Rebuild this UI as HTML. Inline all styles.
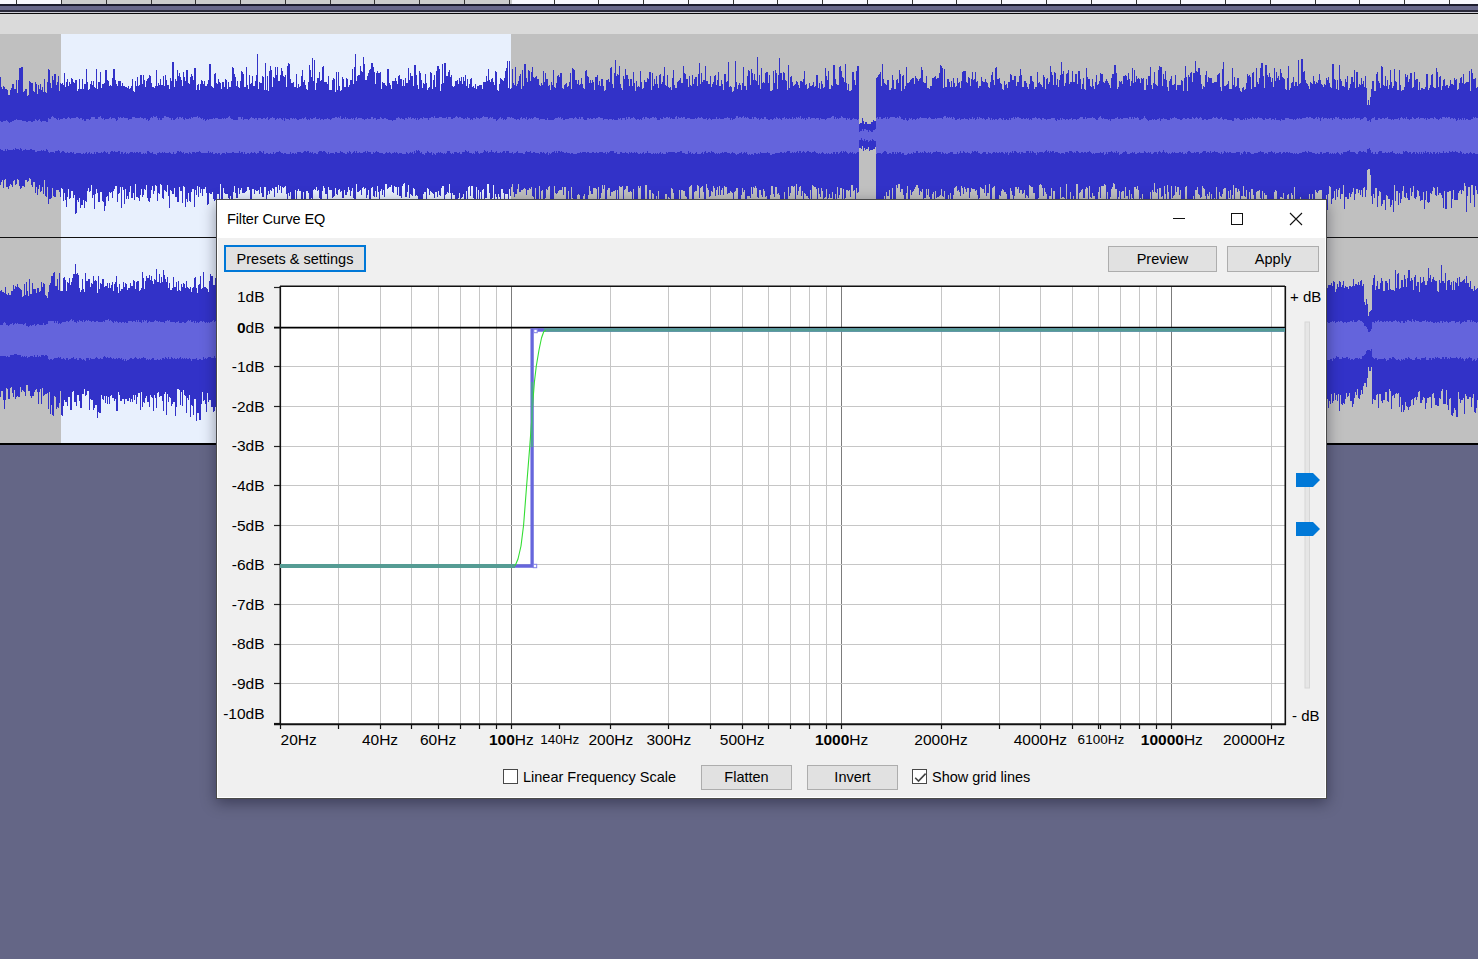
<!DOCTYPE html>
<html><head><meta charset="utf-8">
<style>
html,body{margin:0;padding:0;}
body{width:1478px;height:959px;overflow:hidden;background:#646686;position:relative;font-family:"Liberation Sans", sans-serif;}
.abs{position:absolute;}
.t{position:absolute;white-space:nowrap;color:#000;line-height:1;}
</style></head><body>

<div class="abs" style="left:0;top:0;width:1478px;height:4px;background:#f8f8fe"></div>
<div class="abs" style="left:62px;top:0;width:450px;height:4px;background:#cbcccc"></div>
<div class="abs" style="left:16px;top:0;width:1px;height:4px;background:#333"></div><div class="abs" style="left:61px;top:0;width:1px;height:4px;background:#333"></div><div class="abs" style="left:106px;top:0;width:1px;height:4px;background:#333"></div><div class="abs" style="left:151px;top:0;width:1px;height:4px;background:#333"></div><div class="abs" style="left:195px;top:0;width:1px;height:4px;background:#333"></div><div class="abs" style="left:240px;top:0;width:1px;height:4px;background:#333"></div><div class="abs" style="left:285px;top:0;width:1px;height:4px;background:#333"></div><div class="abs" style="left:330px;top:0;width:1px;height:4px;background:#333"></div><div class="abs" style="left:374px;top:0;width:1px;height:4px;background:#333"></div><div class="abs" style="left:419px;top:0;width:1px;height:4px;background:#333"></div><div class="abs" style="left:464px;top:0;width:1px;height:4px;background:#333"></div><div class="abs" style="left:509px;top:0;width:1px;height:4px;background:#333"></div><div class="abs" style="left:554px;top:0;width:1px;height:4px;background:#333"></div><div class="abs" style="left:598px;top:0;width:1px;height:4px;background:#333"></div><div class="abs" style="left:643px;top:0;width:1px;height:4px;background:#333"></div><div class="abs" style="left:688px;top:0;width:1px;height:4px;background:#333"></div><div class="abs" style="left:733px;top:0;width:1px;height:4px;background:#333"></div><div class="abs" style="left:777px;top:0;width:1px;height:4px;background:#333"></div><div class="abs" style="left:822px;top:0;width:1px;height:4px;background:#333"></div><div class="abs" style="left:867px;top:0;width:1px;height:4px;background:#333"></div><div class="abs" style="left:912px;top:0;width:1px;height:4px;background:#333"></div><div class="abs" style="left:956px;top:0;width:1px;height:4px;background:#333"></div><div class="abs" style="left:1001px;top:0;width:1px;height:4px;background:#333"></div><div class="abs" style="left:1046px;top:0;width:1px;height:4px;background:#333"></div><div class="abs" style="left:1091px;top:0;width:1px;height:4px;background:#333"></div><div class="abs" style="left:1136px;top:0;width:1px;height:4px;background:#333"></div><div class="abs" style="left:1180px;top:0;width:1px;height:4px;background:#333"></div><div class="abs" style="left:1225px;top:0;width:1px;height:4px;background:#333"></div><div class="abs" style="left:1270px;top:0;width:1px;height:4px;background:#333"></div><div class="abs" style="left:1315px;top:0;width:1px;height:4px;background:#333"></div><div class="abs" style="left:1359px;top:0;width:1px;height:4px;background:#333"></div><div class="abs" style="left:1404px;top:0;width:1px;height:4px;background:#333"></div><div class="abs" style="left:1449px;top:0;width:1px;height:4px;background:#333"></div><div class="abs" style="left:1494px;top:0;width:1px;height:4px;background:#333"></div>
<div class="abs" style="left:0;top:4px;width:1478px;height:2px;background:#1c1c2e"></div>
<div class="abs" style="left:0;top:6px;width:1478px;height:4px;background:#67678a"></div>
<div class="abs" style="left:0;top:10px;width:1478px;height:2px;background:#2a2a3a"></div>
<div class="abs" style="left:0;top:12px;width:1478px;height:1px;background:#ccccd6"></div>
<div class="abs" style="left:0;top:13px;width:1478px;height:1px;background:#0a0a0a"></div>
<div class="abs" style="left:0;top:14px;width:1478px;height:20px;background:#dadada"></div>
<svg class="abs" style="left:0;top:34px" width="1478" height="411" viewBox="0 34 1478 411" shape-rendering="crispEdges"><rect x="0" y="34" width="1478" height="410" fill="#c0c0c0"/><rect x="61" y="34" width="450" height="410" fill="#e8f0fd"/><path fill="#3232c8" d="M0,77V77h1V87h1V89h1V86h1V87h1V89h1V89h1V90h1V95h1V95h1V90h1V88h1V84h1V84h1V89h1V89h1V80h1V93h1V80h1V68h1V68h1V67h1V67h1V92h1V91h1V89h1V89h1V96h1V95h1V81h1V82h1V83h1V83h1V91h1V92h1V82h1V84h1V94h1V85h1V89h1V84h1V90h1V87h1V92h1V79h1V92h1V93h1V82h1V69h1V70h1V83h1V88h1V76h1V80h1V74h1V74h1V85h1V82h1V76h1V91h1V83h1V84h1V83h1V85h1V73h1V87h1V82h1V79h1V86h1V82h1V84h1V78h1V79h1V82h1V83h1V80h1V80h1V91h1V89h1V79h1V89h1V89h1V79h1V89h1V84h1V84h1V69h1V82h1V90h1V89h1V84h1V81h1V85h1V81h1V87h1V88h1V69h1V89h1V82h1V82h1V72h1V88h1V84h1V84h1V83h1V70h1V70h1V80h1V81h1V86h1V85h1V86h1V78h1V69h1V69h1V80h1V84h1V86h1V81h1V81h1V81h1V86h1V83h1V86h1V86h1V87h1V87h1V88h1V86h1V89h1V88h1V86h1V79h1V91h1V92h1V81h1V86h1V77h1V86h1V85h1V75h1V75h1V84h1V75h1V80h1V87h1V81h1V79h1V78h1V75h1V76h1V83h1V87h1V87h1V88h1V86h1V70h1V86h1V83h1V85h1V79h1V85h1V85h1V76h1V86h1V75h1V80h1V85h1V85h1V89h1V78h1V81h1V62h1V62h1V87h1V79h1V81h1V70h1V76h1V73h1V77h1V80h1V86h1V72h1V77h1V81h1V70h1V70h1V83h1V84h1V77h1V74h1V76h1V80h1V68h1V68h1V90h1V85h1V84h1V90h1V84h1V80h1V81h1V84h1V81h1V86h1V86h1V84h1V80h1V64h1V64h1V86h1V87h1V88h1V74h1V73h1V83h1V84h1V79h1V82h1V83h1V89h1V82h1V82h1V87h1V79h1V80h1V89h1V82h1V87h1V87h1V81h1V67h1V68h1V74h1V77h1V86h1V81h1V87h1V88h1V81h1V71h1V72h1V74h1V87h1V87h1V67h1V85h1V89h1V75h1V84h1V83h1V76h1V86h1V86h1V81h1V75h1V54h1V89h1V82h1V83h1V83h1V76h1V77h1V90h1V63h1V90h1V76h1V91h1V71h1V66h1V70h1V87h1V77h1V78h1V67h1V75h1V67h1V81h1V81h1V75h1V68h1V71h1V76h1V77h1V75h1V87h1V66h1V63h1V64h1V79h1V83h1V83h1V82h1V87h1V87h1V74h1V88h1V84h1V87h1V86h1V76h1V70h1V82h1V80h1V85h1V89h1V90h1V82h1V65h1V70h1V77h1V58h1V81h1V60h1V90h1V83h1V78h1V78h1V72h1V81h1V80h1V67h1V66h1V82h1V82h1V82h1V84h1V76h1V90h1V90h1V90h1V80h1V78h1V79h1V92h1V72h1V90h1V72h1V86h1V91h1V90h1V77h1V79h1V87h1V87h1V78h1V79h1V87h1V85h1V80h1V80h1V69h1V84h1V67h1V54h1V81h1V76h1V75h1V75h1V66h1V71h1V72h1V57h1V64h1V80h1V80h1V76h1V73h1V70h1V69h1V63h1V63h1V67h1V72h1V84h1V73h1V71h1V73h1V73h1V72h1V89h1V82h1V83h1V83h1V85h1V86h1V69h1V69h1V83h1V85h1V89h1V81h1V81h1V81h1V78h1V81h1V84h1V76h1V75h1V79h1V79h1V86h1V80h1V86h1V78h1V83h1V83h1V68h1V80h1V73h1V76h1V76h1V86h1V65h1V65h1V75h1V85h1V89h1V71h1V73h1V80h1V88h1V83h1V84h1V74h1V83h1V90h1V88h1V87h1V72h1V73h1V89h1V80h1V75h1V87h1V71h1V66h1V66h1V69h1V91h1V84h1V64h1V83h1V63h1V63h1V76h1V76h1V72h1V70h1V77h1V75h1V86h1V87h1V86h1V81h1V81h1V80h1V84h1V78h1V81h1V77h1V84h1V77h1V81h1V75h1V86h1V79h1V88h1V84h1V79h1V78h1V87h1V86h1V88h1V84h1V89h1V86h1V86h1V85h1V85h1V85h1V89h1V82h1V82h1V82h1V76h1V81h1V69h1V80h1V82h1V79h1V78h1V82h1V85h1V71h1V72h1V90h1V91h1V84h1V78h1V79h1V80h1V81h1V78h1V71h1V68h1V61h1V88h1V61h1V89h1V88h1V69h1V83h1V85h1V67h1V86h1V84h1V81h1V76h1V74h1V89h1V70h1V86h1V64h1V64h1V78h1V82h1V70h1V71h1V81h1V72h1V67h1V77h1V78h1V77h1V76h1V79h1V79h1V85h1V86h1V83h1V85h1V71h1V82h1V73h1V79h1V79h1V86h1V85h1V90h1V82h1V85h1V70h1V87h1V88h1V83h1V76h1V75h1V77h1V73h1V73h1V88h1V89h1V85h1V84h1V83h1V87h1V86h1V82h1V73h1V89h1V68h1V69h1V70h1V80h1V80h1V84h1V80h1V85h1V84h1V78h1V84h1V88h1V89h1V71h1V70h1V76h1V77h1V83h1V80h1V83h1V80h1V82h1V90h1V77h1V77h1V75h1V85h1V81h1V86h1V79h1V79h1V86h1V91h1V90h1V80h1V80h1V79h1V82h1V68h1V67h1V84h1V88h1V73h1V60h1V76h1V74h1V75h1V66h1V84h1V88h1V90h1V76h1V79h1V69h1V75h1V75h1V79h1V86h1V79h1V79h1V86h1V72h1V83h1V91h1V81h1V87h1V86h1V87h1V71h1V82h1V89h1V88h1V80h1V82h1V82h1V78h1V79h1V72h1V72h1V90h1V73h1V86h1V79h1V84h1V76h1V84h1V88h1V75h1V74h1V84h1V82h1V76h1V67h1V85h1V86h1V75h1V87h1V88h1V87h1V90h1V78h1V70h1V85h1V88h1V88h1V82h1V81h1V80h1V78h1V83h1V83h1V66h1V73h1V74h1V79h1V79h1V87h1V76h1V85h1V86h1V75h1V84h1V79h1V77h1V77h1V86h1V74h1V63h1V84h1V73h1V82h1V80h1V80h1V66h1V81h1V81h1V84h1V84h1V76h1V87h1V84h1V82h1V76h1V75h1V85h1V80h1V72h1V86h1V86h1V80h1V84h1V90h1V74h1V74h1V82h1V81h1V62h1V87h1V86h1V87h1V92h1V91h1V87h1V61h1V82h1V89h1V85h1V83h1V85h1V90h1V83h1V67h1V86h1V86h1V90h1V76h1V70h1V71h1V85h1V69h1V73h1V80h1V74h1V80h1V81h1V57h1V85h1V75h1V89h1V68h1V83h1V82h1V83h1V73h1V72h1V72h1V83h1V75h1V91h1V91h1V90h1V71h1V83h1V70h1V73h1V89h1V75h1V58h1V73h1V73h1V80h1V72h1V73h1V80h1V81h1V90h1V65h1V88h1V77h1V76h1V82h1V86h1V85h1V84h1V81h1V82h1V85h1V88h1V81h1V81h1V82h1V79h1V71h1V85h1V84h1V89h1V88h1V83h1V86h1V86h1V85h1V82h1V87h1V86h1V75h1V75h1V88h1V83h1V89h1V81h1V84h1V88h1V87h1V68h1V76h1V80h1V71h1V89h1V89h1V85h1V86h1V65h1V65h1V79h1V84h1V85h1V85h1V67h1V66h1V71h1V77h1V78h1V82h1V64h1V83h1V90h1V84h1V91h1V91h1V90h1V72h1V72h1V80h1V85h1V71h1V66h1V66h1V124h1V123h1V123h1V118h1V121h1V124h1V122h1V122h1V124h1V124h1V124h1V124h1V122h1V122h1V120h1V121h1V121h1V78h1V77h1V75h1V74h1V72h1V86h1V64h1V79h1V83h1V84h1V85h1V80h1V80h1V90h1V90h1V88h1V75h1V80h1V89h1V89h1V80h1V79h1V83h1V70h1V74h1V91h1V76h1V75h1V89h1V86h1V67h1V83h1V83h1V82h1V80h1V79h1V78h1V78h1V84h1V76h1V78h1V79h1V81h1V79h1V78h1V67h1V70h1V82h1V83h1V83h1V76h1V88h1V88h1V89h1V86h1V86h1V78h1V78h1V77h1V76h1V79h1V78h1V78h1V73h1V65h1V66h1V68h1V88h1V69h1V87h1V87h1V79h1V79h1V82h1V87h1V81h1V87h1V78h1V83h1V87h1V86h1V78h1V83h1V82h1V88h1V81h1V72h1V71h1V71h1V71h1V82h1V83h1V77h1V78h1V86h1V79h1V72h1V80h1V79h1V72h1V82h1V81h1V88h1V86h1V86h1V77h1V81h1V82h1V82h1V79h1V82h1V83h1V87h1V88h1V82h1V75h1V72h1V80h1V85h1V68h1V67h1V79h1V79h1V78h1V83h1V84h1V89h1V90h1V81h1V85h1V84h1V88h1V82h1V82h1V74h1V75h1V80h1V80h1V76h1V76h1V86h1V82h1V82h1V76h1V69h1V75h1V87h1V87h1V81h1V81h1V83h1V87h1V89h1V84h1V76h1V76h1V81h1V82h1V89h1V87h1V87h1V72h1V83h1V82h1V84h1V85h1V87h1V75h1V77h1V89h1V79h1V78h1V84h1V82h1V66h1V72h1V75h1V85h1V72h1V73h1V85h1V79h1V87h1V80h1V75h1V62h1V74h1V71h1V86h1V83h1V74h1V73h1V70h1V84h1V82h1V82h1V71h1V82h1V82h1V74h1V74h1V84h1V71h1V71h1V79h1V89h1V84h1V78h1V89h1V90h1V68h1V77h1V79h1V79h1V86h1V87h1V79h1V86h1V89h1V82h1V75h1V85h1V84h1V81h1V73h1V74h1V74h1V82h1V83h1V81h1V79h1V81h1V83h1V85h1V88h1V78h1V74h1V74h1V65h1V65h1V73h1V89h1V87h1V81h1V82h1V81h1V84h1V76h1V76h1V75h1V76h1V80h1V73h1V79h1V86h1V81h1V68h1V83h1V70h1V82h1V76h1V79h1V78h1V79h1V83h1V78h1V79h1V78h1V90h1V90h1V79h1V85h1V76h1V76h1V67h1V85h1V89h1V83h1V72h1V84h1V85h1V86h1V70h1V66h1V67h1V67h1V86h1V74h1V79h1V71h1V80h1V87h1V91h1V81h1V79h1V76h1V85h1V85h1V84h1V75h1V90h1V85h1V85h1V85h1V85h1V80h1V81h1V91h1V78h1V66h1V77h1V91h1V75h1V77h1V73h1V72h1V82h1V73h1V73h1V61h1V71h1V72h1V68h1V68h1V75h1V84h1V89h1V86h1V87h1V75h1V71h1V82h1V77h1V78h1V78h1V78h1V83h1V83h1V82h1V82h1V82h1V75h1V74h1V73h1V87h1V91h1V69h1V62h1V86h1V86h1V85h1V84h1V81h1V89h1V89h1V89h1V68h1V85h1V77h1V87h1V86h1V78h1V78h1V88h1V91h1V92h1V88h1V87h1V90h1V89h1V83h1V74h1V76h1V75h1V77h1V89h1V73h1V72h1V87h1V87h1V68h1V82h1V84h1V78h1V68h1V63h1V63h1V76h1V88h1V65h1V65h1V75h1V77h1V73h1V77h1V82h1V78h1V87h1V68h1V81h1V72h1V78h1V76h1V80h1V69h1V73h1V77h1V78h1V79h1V89h1V90h1V78h1V66h1V90h1V88h1V83h1V82h1V77h1V86h1V82h1V82h1V86h1V60h1V84h1V83h1V59h1V59h1V72h1V71h1V80h1V83h1V84h1V86h1V89h1V82h1V83h1V84h1V76h1V81h1V84h1V82h1V83h1V80h1V74h1V80h1V84h1V85h1V87h1V84h1V85h1V78h1V80h1V77h1V83h1V87h1V88h1V64h1V64h1V79h1V80h1V89h1V80h1V90h1V65h1V79h1V81h1V86h1V86h1V87h1V79h1V82h1V76h1V90h1V88h1V84h1V77h1V77h1V82h1V70h1V88h1V72h1V72h1V87h1V84h1V85h1V78h1V84h1V81h1V87h1V76h1V88h1V105h1V100h1V105h1V97h1V89h1V81h1V81h1V91h1V91h1V74h1V72h1V81h1V83h1V88h1V66h1V67h1V85h1V86h1V76h1V86h1V80h1V89h1V85h1V70h1V82h1V88h1V86h1V69h1V81h1V82h1V90h1V90h1V70h1V85h1V91h1V90h1V90h1V87h1V74h1V77h1V75h1V82h1V79h1V73h1V73h1V88h1V87h1V72h1V80h1V79h1V79h1V90h1V82h1V90h1V88h1V88h1V89h1V89h1V87h1V74h1V74h1V90h1V88h1V85h1V75h1V74h1V87h1V88h1V88h1V68h1V72h1V87h1V77h1V76h1V90h1V86h1V80h1V79h1V86h1V85h1V85h1V88h1V86h1V80h1V84h1V84h1V85h1V78h1V80h1V79h1V90h1V89h1V83h1V78h1V77h1V83h1V74h1V84h1V83h1V82h1V82h1V82h1V71h1V91h1V69h1V73h1V79h1V79h1V78h1V88h1V87h1V194h-1V190h-1V186h-1V207h-1V195h-1V185h-1V185h-1V203h-1V187h-1V187h-1V196h-1V212h-1V186h-1V183h-1V191h-1V190h-1V194h-1V190h-1V191h-1V193h-1V200h-1V200h-1V200h-1V200h-1V190h-1V199h-1V208h-1V191h-1V191h-1V192h-1V192h-1V209h-1V209h-1V191h-1V208h-1V198h-1V195h-1V193h-1V193h-1V195h-1V187h-1V196h-1V195h-1V188h-1V187h-1V191h-1V194h-1V193h-1V202h-1V203h-1V202h-1V191h-1V200h-1V209h-1V192h-1V200h-1V200h-1V201h-1V196h-1V191h-1V190h-1V197h-1V199h-1V198h-1V186h-1V192h-1V196h-1V188h-1V200h-1V200h-1V198h-1V193h-1V198h-1V197h-1V186h-1V191h-1V199h-1V203h-1V193h-1V205h-1V191h-1V191h-1V201h-1V185h-1V212h-1V200h-1V205h-1V207h-1V199h-1V199h-1V196h-1V195h-1V210h-1V200h-1V200h-1V204h-1V206h-1V192h-1V191h-1V196h-1V207h-1V188h-1V188h-1V198h-1V194h-1V204h-1V196h-1V175h-1V169h-1V169h-1V170h-1V190h-1V197h-1V187h-1V188h-1V197h-1V190h-1V195h-1V190h-1V193h-1V189h-1V189h-1V194h-1V200h-1V188h-1V192h-1V194h-1V197h-1V193h-1V199h-1V199h-1V197h-1V197h-1V209h-1V185h-1V194h-1V194h-1V199h-1V188h-1V190h-1V197h-1V189h-1V200h-1V191h-1V198h-1V199h-1V204h-1V187h-1V186h-1V194h-1V210h-1V195h-1V202h-1V204h-1V203h-1V203h-1V190h-1V190h-1V190h-1V191h-1V193h-1V192h-1V190h-1V202h-1V202h-1V194h-1V203h-1V203h-1V194h-1V212h-1V208h-1V206h-1V205h-1V205h-1V205h-1V202h-1V218h-1V197h-1V205h-1V213h-1V212h-1V202h-1V207h-1V187h-1V202h-1V195h-1V193h-1V202h-1V202h-1V194h-1V195h-1V202h-1V199h-1V199h-1V193h-1V198h-1V197h-1V197h-1V202h-1V200h-1V202h-1V191h-1V190h-1V192h-1V200h-1V201h-1V209h-1V199h-1V213h-1V199h-1V200h-1V195h-1V195h-1V193h-1V206h-1V191h-1V200h-1V198h-1V190h-1V191h-1V191h-1V192h-1V200h-1V199h-1V195h-1V189h-1V189h-1V207h-1V192h-1V204h-1V204h-1V190h-1V197h-1V196h-1V186h-1V196h-1V196h-1V200h-1V191h-1V189h-1V192h-1V188h-1V188h-1V199h-1V185h-1V195h-1V200h-1V190h-1V198h-1V191h-1V199h-1V199h-1V188h-1V188h-1V189h-1V194h-1V197h-1V196h-1V192h-1V201h-1V201h-1V187h-1V199h-1V198h-1V201h-1V200h-1V194h-1V206h-1V192h-1V196h-1V194h-1V200h-1V196h-1V189h-1V188h-1V186h-1V197h-1V198h-1V195h-1V194h-1V187h-1V190h-1V190h-1V199h-1V196h-1V208h-1V207h-1V199h-1V199h-1V204h-1V208h-1V186h-1V187h-1V208h-1V199h-1V199h-1V200h-1V190h-1V195h-1V187h-1V187h-1V192h-1V186h-1V195h-1V196h-1V198h-1V186h-1V204h-1V204h-1V192h-1V185h-1V202h-1V194h-1V186h-1V200h-1V196h-1V197h-1V188h-1V188h-1V204h-1V189h-1V193h-1V192h-1V183h-1V192h-1V190h-1V207h-1V192h-1V207h-1V207h-1V210h-1V200h-1V200h-1V200h-1V200h-1V194h-1V199h-1V198h-1V200h-1V190h-1V186h-1V189h-1V187h-1V187h-1V200h-1V198h-1V194h-1V205h-1V190h-1V209h-1V196h-1V196h-1V187h-1V198h-1V191h-1V191h-1V192h-1V207h-1V191h-1V197h-1V205h-1V189h-1V189h-1V184h-1V183h-1V187h-1V189h-1V197h-1V203h-1V201h-1V192h-1V204h-1V185h-1V184h-1V186h-1V186h-1V186h-1V198h-1V187h-1V192h-1V203h-1V202h-1V204h-1V196h-1V196h-1V193h-1V198h-1V197h-1V186h-1V199h-1V188h-1V187h-1V189h-1V198h-1V198h-1V189h-1V190h-1V192h-1V193h-1V203h-1V184h-1V184h-1V206h-1V207h-1V196h-1V208h-1V208h-1V192h-1V206h-1V207h-1V203h-1V184h-1V210h-1V198h-1V197h-1V197h-1V198h-1V187h-1V206h-1V199h-1V203h-1V199h-1V199h-1V191h-1V191h-1V210h-1V188h-1V196h-1V196h-1V201h-1V202h-1V194h-1V192h-1V188h-1V196h-1V188h-1V185h-1V184h-1V185h-1V198h-1V201h-1V200h-1V202h-1V193h-1V193h-1V187h-1V187h-1V186h-1V185h-1V198h-1V196h-1V195h-1V198h-1V190h-1V193h-1V194h-1V190h-1V190h-1V193h-1V187h-1V189h-1V187h-1V187h-1V196h-1V200h-1V195h-1V191h-1V188h-1V200h-1V203h-1V203h-1V194h-1V192h-1V192h-1V190h-1V189h-1V191h-1V196h-1V195h-1V206h-1V206h-1V201h-1V201h-1V186h-1V187h-1V188h-1V200h-1V200h-1V184h-1V193h-1V193h-1V196h-1V185h-1V193h-1V189h-1V189h-1V188h-1V187h-1V198h-1V199h-1V195h-1V190h-1V191h-1V189h-1V189h-1V189h-1V188h-1V192h-1V198h-1V188h-1V188h-1V192h-1V189h-1V187h-1V194h-1V188h-1V186h-1V196h-1V192h-1V190h-1V191h-1V186h-1V187h-1V188h-1V195h-1V209h-1V202h-1V193h-1V199h-1V195h-1V203h-1V207h-1V202h-1V191h-1V197h-1V196h-1V189h-1V195h-1V196h-1V197h-1V197h-1V198h-1V191h-1V204h-1V192h-1V194h-1V203h-1V203h-1V197h-1V189h-1V195h-1V189h-1V198h-1V198h-1V201h-1V189h-1V192h-1V191h-1V195h-1V188h-1V185h-1V185h-1V187h-1V189h-1V191h-1V192h-1V195h-1V190h-1V203h-1V205h-1V186h-1V193h-1V205h-1V205h-1V195h-1V189h-1V189h-1V192h-1V184h-1V184h-1V188h-1V185h-1V199h-1V206h-1V207h-1V188h-1V206h-1V206h-1V190h-1V196h-1V196h-1V192h-1V208h-1V196h-1V201h-1V200h-1V200h-1V201h-1V207h-1V202h-1V206h-1V203h-1V147h-1V149h-1V149h-1V150h-1V150h-1V150h-1V151h-1V147h-1V149h-1V149h-1V150h-1V148h-1V151h-1V146h-1V149h-1V148h-1V148h-1V192h-1V193h-1V188h-1V199h-1V190h-1V191h-1V185h-1V185h-1V197h-1V190h-1V191h-1V190h-1V190h-1V198h-1V210h-1V189h-1V199h-1V188h-1V188h-1V195h-1V198h-1V187h-1V202h-1V194h-1V199h-1V199h-1V192h-1V198h-1V198h-1V194h-1V198h-1V201h-1V189h-1V197h-1V198h-1V210h-1V191h-1V188h-1V197h-1V194h-1V188h-1V202h-1V189h-1V187h-1V187h-1V186h-1V185h-1V199h-1V190h-1V207h-1V198h-1V196h-1V196h-1V194h-1V193h-1V201h-1V191h-1V196h-1V186h-1V187h-1V191h-1V195h-1V184h-1V208h-1V186h-1V187h-1V186h-1V186h-1V193h-1V196h-1V187h-1V199h-1V200h-1V204h-1V192h-1V201h-1V207h-1V205h-1V215h-1V195h-1V193h-1V194h-1V187h-1V187h-1V197h-1V194h-1V186h-1V186h-1V195h-1V199h-1V201h-1V202h-1V196h-1V197h-1V191h-1V189h-1V197h-1V195h-1V190h-1V190h-1V198h-1V197h-1V188h-1V186h-1V188h-1V187h-1V194h-1V187h-1V198h-1V196h-1V196h-1V196h-1V204h-1V205h-1V190h-1V192h-1V188h-1V195h-1V199h-1V200h-1V200h-1V188h-1V188h-1V191h-1V192h-1V200h-1V193h-1V192h-1V191h-1V193h-1V193h-1V194h-1V187h-1V187h-1V186h-1V195h-1V188h-1V190h-1V195h-1V186h-1V195h-1V187h-1V190h-1V196h-1V188h-1V186h-1V192h-1V191h-1V196h-1V197h-1V190h-1V188h-1V184h-1V201h-1V202h-1V192h-1V186h-1V187h-1V188h-1V198h-1V186h-1V185h-1V191h-1V191h-1V192h-1V202h-1V202h-1V185h-1V186h-1V187h-1V199h-1V200h-1V197h-1V196h-1V191h-1V191h-1V190h-1V190h-1V205h-1V190h-1V207h-1V208h-1V212h-1V207h-1V207h-1V193h-1V189h-1V188h-1V203h-1V198h-1V197h-1V209h-1V194h-1V194h-1V206h-1V201h-1V200h-1V213h-1V201h-1V201h-1V191h-1V207h-1V196h-1V202h-1V201h-1V194h-1V193h-1V203h-1V190h-1V190h-1V205h-1V201h-1V185h-1V185h-1V205h-1V205h-1V210h-1V210h-1V186h-1V188h-1V186h-1V199h-1V201h-1V202h-1V203h-1V189h-1V202h-1V192h-1V191h-1V192h-1V192h-1V186h-1V186h-1V189h-1V190h-1V201h-1V186h-1V187h-1V187h-1V186h-1V205h-1V190h-1V199h-1V190h-1V191h-1V191h-1V192h-1V192h-1V196h-1V188h-1V188h-1V190h-1V199h-1V201h-1V185h-1V189h-1V185h-1V193h-1V198h-1V199h-1V187h-1V205h-1V189h-1V188h-1V188h-1V188h-1V194h-1V194h-1V191h-1V186h-1V195h-1V207h-1V215h-1V214h-1V194h-1V196h-1V202h-1V207h-1V199h-1V195h-1V194h-1V195h-1V205h-1V206h-1V207h-1V207h-1V198h-1V187h-1V199h-1V208h-1V191h-1V210h-1V200h-1V187h-1V187h-1V195h-1V187h-1V190h-1V190h-1V190h-1V191h-1V193h-1V194h-1V193h-1V186h-1V199h-1V204h-1V206h-1V200h-1V186h-1V187h-1V190h-1V189h-1V198h-1V209h-1V210h-1V190h-1V191h-1V205h-1V186h-1V203h-1V204h-1V204h-1V188h-1V201h-1V197h-1V196h-1V187h-1V189h-1V188h-1V190h-1V190h-1V195h-1V189h-1V188h-1V189h-1V190h-1V190h-1V192h-1V192h-1V184h-1V189h-1V194h-1V194h-1V197h-1V192h-1V184h-1V187h-1V196h-1V189h-1V200h-1V194h-1V194h-1V194h-1V200h-1V193h-1V189h-1V189h-1V207h-1V197h-1V194h-1V200h-1V197h-1V194h-1V201h-1V185h-1V198h-1V200h-1V200h-1V193h-1V184h-1V184h-1V198h-1V198h-1V199h-1V189h-1V190h-1V199h-1V192h-1V200h-1V190h-1V205h-1V187h-1V199h-1V200h-1V198h-1V186h-1V186h-1V196h-1V186h-1V187h-1V208h-1V191h-1V203h-1V204h-1V194h-1V197h-1V198h-1V200h-1V193h-1V198h-1V200h-1V202h-1V203h-1V195h-1V195h-1V193h-1V201h-1V193h-1V184h-1V193h-1V192h-1V194h-1V195h-1V199h-1V186h-1V186h-1V188h-1V196h-1V195h-1V191h-1V197h-1V192h-1V192h-1V198h-1V194h-1V193h-1V192h-1V191h-1V195h-1V189h-1V188h-1V200h-1V192h-1V192h-1V194h-1V199h-1V200h-1V200h-1V200h-1V200h-1V196h-1V195h-1V196h-1V189h-1V188h-1V196h-1V195h-1V194h-1V198h-1V185h-1V192h-1V197h-1V197h-1V183h-1V184h-1V186h-1V198h-1V196h-1V196h-1V187h-1V195h-1V187h-1V187h-1V186h-1V193h-1V192h-1V185h-1V187h-1V187h-1V188h-1V189h-1V184h-1V184h-1V197h-1V190h-1V195h-1V189h-1V191h-1V202h-1V192h-1V186h-1V197h-1V191h-1V197h-1V196h-1V187h-1V188h-1V204h-1V204h-1V190h-1V195h-1V198h-1V188h-1V189h-1V187h-1V188h-1V195h-1V190h-1V191h-1V192h-1V192h-1V184h-1V200h-1V201h-1V198h-1V188h-1V191h-1V196h-1V190h-1V187h-1V192h-1V195h-1V195h-1V190h-1V198h-1V198h-1V191h-1V192h-1V189h-1V190h-1V195h-1V194h-1V188h-1V196h-1V197h-1V198h-1V190h-1V190h-1V190h-1V187h-1V200h-1V194h-1V194h-1V188h-1V186h-1V191h-1V203h-1V203h-1V198h-1V190h-1V191h-1V187h-1V190h-1V189h-1V190h-1V201h-1V198h-1V200h-1V199h-1V193h-1V191h-1V191h-1V203h-1V204h-1V192h-1V199h-1V199h-1V191h-1V191h-1V189h-1V191h-1V199h-1V190h-1V205h-1V205h-1V200h-1V199h-1V192h-1V196h-1V193h-1V199h-1V194h-1V186h-1V187h-1V188h-1V187h-1V193h-1V186h-1V190h-1V185h-1V193h-1V187h-1V187h-1V197h-1V189h-1V188h-1V191h-1V190h-1V194h-1V191h-1V195h-1V201h-1V187h-1V187h-1V197h-1V197h-1V193h-1V187h-1V194h-1V190h-1V191h-1V191h-1V190h-1V194h-1V189h-1V189h-1V204h-1V203h-1V190h-1V187h-1V187h-1V191h-1V192h-1V193h-1V193h-1V193h-1V188h-1V190h-1V194h-1V188h-1V198h-1V198h-1V193h-1V186h-1V192h-1V204h-1V199h-1V196h-1V200h-1V198h-1V194h-1V194h-1V194h-1V193h-1V188h-1V208h-1V202h-1V184h-1V200h-1V194h-1V194h-1V208h-1V200h-1V201h-1V199h-1V192h-1V194h-1V194h-1V193h-1V204h-1V205h-1V193h-1V187h-1V189h-1V189h-1V196h-1V189h-1V193h-1V187h-1V197h-1V186h-1V195h-1V190h-1V207h-1V189h-1V189h-1V192h-1V202h-1V201h-1V193h-1V202h-1V199h-1V207h-1V187h-1V186h-1V203h-1V191h-1V191h-1V187h-1V202h-1V202h-1V197h-1V197h-1V188h-1V194h-1V194h-1V191h-1V190h-1V208h-1V196h-1V185h-1V192h-1V191h-1V190h-1V199h-1V198h-1V185h-1V184h-1V194h-1V193h-1V201h-1V186h-1V185h-1V191h-1V194h-1V186h-1V190h-1V198h-1V202h-1V201h-1V198h-1V185h-1V190h-1V189h-1V195h-1V197h-1V189h-1V195h-1V201h-1V198h-1V197h-1V197h-1V184h-1V200h-1V193h-1V198h-1V198h-1V186h-1V192h-1V199h-1V196h-1V199h-1V189h-1V204h-1V190h-1V187h-1V208h-1V187h-1V193h-1V194h-1V202h-1V186h-1V186h-1V189h-1V191h-1V198h-1V192h-1V193h-1V192h-1V201h-1V196h-1V197h-1V206h-1V211h-1V202h-1V201h-1V192h-1V192h-1V202h-1V202h-1V193h-1V189h-1V194h-1V209h-1V195h-1V198h-1V185h-1V191h-1V192h-1V188h-1V191h-1V202h-1V201h-1V208h-1V200h-1V205h-1V205h-1V208h-1V198h-1V202h-1V200h-1V213h-1V214h-1V195h-1V198h-1V191h-1V191h-1V198h-1V199h-1V189h-1V197h-1V207h-1V200h-1V193h-1V201h-1V189h-1V188h-1V197h-1V192h-1V190h-1V190h-1V190h-1V197h-1V197h-1V196h-1V188h-1V198h-1V199h-1V199h-1V204h-1V187h-1V197h-1V196h-1V180h-1V194h-1V187h-1V191h-1V192h-1V185h-1V189h-1V195h-1V187h-1V193h-1V182h-1V182h-1V187h-1V185h-1V179h-1V178h-1V181h-1V182h-1V180h-1V180h-1V187h-1V186h-1V186h-1V188h-1V189h-1V186h-1V180h-1V179h-1V184h-1V185h-1V180h-1V181h-1V187h-1V185h-1V184h-1V186h-1V189h-1V187h-1V187h-1V179h-1V180h-1V188h-1V180h-1V182h-1V185h-1Z"/><path fill="#6464dc" d="M0,121V121h1V122h1V122h1V121h1V121h1V121h1V120h1V121h1V122h1V123h1V122h1V122h1V121h1V121h1V120h1V120h1V119h1V120h1V120h1V120h1V120h1V120h1V121h1V121h1V121h1V121h1V122h1V122h1V121h1V121h1V121h1V122h1V122h1V121h1V121h1V119h1V120h1V121h1V120h1V119h1V121h1V122h1V121h1V121h1V121h1V121h1V122h1V122h1V118h1V119h1V119h1V117h1V116h1V117h1V118h1V118h1V119h1V120h1V118h1V120h1V119h1V119h1V119h1V118h1V118h1V119h1V119h1V118h1V117h1V118h1V119h1V118h1V118h1V118h1V118h1V118h1V117h1V117h1V118h1V119h1V118h1V118h1V120h1V119h1V121h1V121h1V119h1V119h1V119h1V120h1V119h1V117h1V117h1V117h1V117h1V119h1V119h1V119h1V117h1V117h1V116h1V118h1V119h1V118h1V120h1V119h1V119h1V119h1V119h1V118h1V117h1V119h1V118h1V118h1V118h1V119h1V121h1V120h1V117h1V118h1V117h1V118h1V118h1V117h1V118h1V118h1V118h1V118h1V120h1V119h1V119h1V119h1V117h1V117h1V117h1V118h1V118h1V118h1V118h1V118h1V117h1V118h1V118h1V119h1V118h1V118h1V120h1V119h1V121h1V120h1V118h1V117h1V118h1V116h1V117h1V117h1V116h1V118h1V120h1V118h1V120h1V120h1V118h1V118h1V116h1V116h1V117h1V117h1V117h1V118h1V118h1V120h1V118h1V120h1V120h1V119h1V118h1V117h1V119h1V117h1V117h1V118h1V117h1V119h1V120h1V118h1V119h1V119h1V119h1V118h1V119h1V117h1V118h1V117h1V117h1V117h1V117h1V116h1V118h1V117h1V118h1V119h1V118h1V120h1V119h1V121h1V120h1V119h1V120h1V119h1V119h1V119h1V119h1V118h1V119h1V118h1V118h1V118h1V119h1V119h1V119h1V119h1V118h1V119h1V118h1V119h1V118h1V118h1V117h1V116h1V118h1V119h1V119h1V120h1V120h1V120h1V120h1V120h1V117h1V117h1V117h1V119h1V117h1V120h1V119h1V119h1V119h1V119h1V120h1V119h1V118h1V117h1V118h1V118h1V119h1V118h1V118h1V120h1V118h1V118h1V118h1V119h1V119h1V118h1V118h1V119h1V118h1V117h1V120h1V119h1V118h1V118h1V117h1V118h1V118h1V120h1V119h1V118h1V119h1V118h1V118h1V119h1V120h1V118h1V121h1V118h1V119h1V119h1V119h1V120h1V118h1V118h1V119h1V118h1V119h1V118h1V119h1V120h1V120h1V119h1V119h1V119h1V118h1V119h1V118h1V117h1V119h1V120h1V119h1V120h1V118h1V119h1V119h1V118h1V118h1V117h1V119h1V119h1V119h1V118h1V120h1V119h1V119h1V120h1V119h1V119h1V119h1V118h1V119h1V119h1V120h1V119h1V118h1V118h1V118h1V117h1V117h1V118h1V117h1V118h1V116h1V119h1V119h1V118h1V119h1V117h1V119h1V118h1V119h1V119h1V119h1V118h1V119h1V118h1V120h1V118h1V117h1V119h1V118h1V118h1V118h1V118h1V119h1V119h1V120h1V119h1V119h1V118h1V119h1V119h1V119h1V117h1V117h1V119h1V118h1V118h1V120h1V119h1V119h1V119h1V117h1V118h1V119h1V119h1V118h1V118h1V119h1V119h1V120h1V120h1V120h1V120h1V121h1V120h1V120h1V120h1V118h1V118h1V117h1V118h1V119h1V118h1V119h1V119h1V120h1V118h1V118h1V119h1V117h1V118h1V117h1V119h1V118h1V118h1V119h1V118h1V120h1V118h1V120h1V119h1V118h1V118h1V119h1V117h1V118h1V118h1V118h1V118h1V120h1V118h1V118h1V117h1V117h1V118h1V116h1V118h1V118h1V118h1V118h1V117h1V117h1V117h1V118h1V118h1V118h1V118h1V117h1V119h1V117h1V117h1V117h1V119h1V119h1V118h1V118h1V117h1V116h1V117h1V118h1V117h1V117h1V118h1V118h1V119h1V119h1V118h1V119h1V117h1V118h1V118h1V120h1V119h1V120h1V118h1V118h1V119h1V117h1V118h1V118h1V119h1V118h1V118h1V117h1V116h1V117h1V117h1V117h1V117h1V119h1V118h1V117h1V118h1V117h1V119h1V119h1V119h1V121h1V120h1V119h1V118h1V117h1V119h1V118h1V120h1V119h1V120h1V119h1V117h1V117h1V117h1V118h1V117h1V118h1V118h1V119h1V119h1V120h1V119h1V119h1V120h1V118h1V117h1V119h1V118h1V118h1V119h1V117h1V120h1V119h1V118h1V119h1V118h1V119h1V118h1V117h1V117h1V118h1V118h1V118h1V120h1V119h1V119h1V119h1V119h1V119h1V120h1V120h1V118h1V120h1V120h1V120h1V120h1V120h1V120h1V119h1V118h1V118h1V118h1V117h1V118h1V117h1V119h1V118h1V120h1V120h1V119h1V119h1V119h1V119h1V118h1V118h1V118h1V118h1V119h1V118h1V117h1V118h1V119h1V119h1V117h1V119h1V117h1V117h1V119h1V120h1V120h1V120h1V118h1V118h1V119h1V118h1V119h1V119h1V118h1V118h1V119h1V118h1V118h1V117h1V117h1V118h1V118h1V118h1V120h1V119h1V119h1V119h1V119h1V120h1V119h1V119h1V119h1V120h1V119h1V120h1V120h1V120h1V120h1V118h1V119h1V118h1V120h1V118h1V118h1V118h1V120h1V117h1V119h1V117h1V117h1V119h1V118h1V118h1V117h1V118h1V119h1V120h1V119h1V119h1V120h1V119h1V120h1V118h1V117h1V119h1V117h1V117h1V118h1V118h1V119h1V118h1V118h1V117h1V117h1V118h1V117h1V118h1V120h1V120h1V120h1V118h1V119h1V119h1V117h1V118h1V118h1V117h1V117h1V118h1V117h1V119h1V118h1V119h1V119h1V119h1V117h1V116h1V119h1V117h1V118h1V118h1V117h1V118h1V117h1V117h1V119h1V119h1V118h1V118h1V118h1V119h1V119h1V119h1V119h1V119h1V118h1V119h1V118h1V117h1V118h1V118h1V117h1V118h1V119h1V119h1V119h1V118h1V120h1V119h1V118h1V119h1V120h1V119h1V119h1V119h1V119h1V117h1V119h1V119h1V118h1V119h1V119h1V119h1V119h1V118h1V118h1V118h1V117h1V118h1V118h1V120h1V118h1V120h1V119h1V119h1V118h1V116h1V116h1V118h1V117h1V117h1V118h1V117h1V116h1V118h1V117h1V118h1V117h1V118h1V119h1V119h1V119h1V117h1V119h1V117h1V117h1V118h1V119h1V118h1V120h1V119h1V118h1V119h1V119h1V117h1V117h1V119h1V119h1V120h1V120h1V119h1V119h1V120h1V119h1V118h1V119h1V117h1V118h1V119h1V118h1V119h1V120h1V118h1V118h1V117h1V119h1V118h1V119h1V119h1V118h1V119h1V119h1V117h1V119h1V118h1V119h1V117h1V118h1V117h1V118h1V116h1V119h1V118h1V119h1V118h1V120h1V118h1V119h1V117h1V117h1V119h1V118h1V118h1V118h1V118h1V119h1V118h1V118h1V118h1V120h1V118h1V119h1V119h1V119h1V119h1V120h1V119h1V118h1V118h1V118h1V118h1V117h1V116h1V116h1V119h1V117h1V119h1V118h1V119h1V118h1V118h1V116h1V117h1V118h1V118h1V118h1V120h1V118h1V119h1V118h1V120h1V120h1V119h1V118h1V119h1V119h1V119h1V120h1V119h1V132h1V131h1V131h1V129h1V131h1V129h1V129h1V130h1V130h1V132h1V130h1V131h1V132h1V132h1V130h1V130h1V129h1V118h1V117h1V119h1V117h1V117h1V119h1V119h1V118h1V118h1V117h1V119h1V117h1V119h1V118h1V117h1V117h1V117h1V117h1V117h1V118h1V118h1V117h1V118h1V116h1V117h1V119h1V119h1V120h1V120h1V118h1V120h1V121h1V120h1V118h1V119h1V118h1V120h1V119h1V119h1V120h1V119h1V118h1V119h1V118h1V117h1V118h1V118h1V118h1V118h1V118h1V118h1V119h1V118h1V117h1V118h1V119h1V119h1V119h1V119h1V118h1V119h1V118h1V118h1V118h1V118h1V118h1V119h1V117h1V116h1V116h1V118h1V117h1V118h1V117h1V118h1V117h1V119h1V117h1V118h1V120h1V120h1V119h1V119h1V118h1V120h1V119h1V119h1V119h1V118h1V119h1V119h1V119h1V120h1V118h1V119h1V119h1V117h1V119h1V118h1V120h1V119h1V117h1V119h1V117h1V118h1V118h1V119h1V118h1V119h1V120h1V119h1V119h1V117h1V118h1V120h1V118h1V120h1V119h1V120h1V119h1V119h1V120h1V119h1V118h1V118h1V119h1V120h1V118h1V120h1V120h1V119h1V120h1V120h1V118h1V120h1V118h1V118h1V117h1V119h1V117h1V118h1V117h1V117h1V118h1V118h1V119h1V119h1V118h1V119h1V119h1V118h1V119h1V118h1V120h1V119h1V120h1V118h1V118h1V118h1V117h1V118h1V119h1V118h1V118h1V119h1V120h1V118h1V118h1V119h1V119h1V120h1V119h1V119h1V119h1V119h1V118h1V118h1V118h1V118h1V120h1V121h1V119h1V120h1V120h1V118h1V120h1V118h1V119h1V119h1V120h1V119h1V119h1V120h1V119h1V119h1V118h1V120h1V119h1V119h1V119h1V120h1V119h1V119h1V118h1V117h1V117h1V117h1V119h1V119h1V117h1V119h1V118h1V118h1V118h1V118h1V118h1V117h1V118h1V118h1V119h1V120h1V120h1V118h1V117h1V116h1V118h1V119h1V118h1V119h1V119h1V119h1V119h1V120h1V119h1V121h1V119h1V119h1V119h1V119h1V118h1V118h1V117h1V119h1V119h1V118h1V119h1V119h1V118h1V118h1V118h1V118h1V118h1V119h1V117h1V117h1V119h1V117h1V119h1V117h1V118h1V118h1V117h1V118h1V120h1V120h1V119h1V119h1V118h1V116h1V118h1V119h1V120h1V121h1V120h1V120h1V120h1V119h1V120h1V119h1V120h1V120h1V119h1V119h1V118h1V121h1V119h1V119h1V118h1V119h1V119h1V119h1V120h1V120h1V120h1V118h1V119h1V118h1V118h1V117h1V118h1V118h1V119h1V119h1V119h1V120h1V120h1V119h1V118h1V118h1V119h1V119h1V118h1V118h1V119h1V119h1V119h1V117h1V118h1V119h1V118h1V117h1V118h1V119h1V118h1V117h1V118h1V120h1V120h1V119h1V119h1V120h1V120h1V119h1V119h1V119h1V119h1V118h1V117h1V118h1V118h1V117h1V118h1V119h1V119h1V118h1V117h1V119h1V120h1V119h1V119h1V119h1V120h1V120h1V120h1V120h1V120h1V121h1V121h1V118h1V118h1V119h1V118h1V118h1V119h1V120h1V120h1V120h1V119h1V120h1V118h1V120h1V118h1V119h1V119h1V118h1V119h1V117h1V118h1V119h1V118h1V119h1V118h1V117h1V118h1V118h1V118h1V119h1V120h1V120h1V118h1V119h1V119h1V119h1V118h1V118h1V120h1V119h1V119h1V120h1V118h1V120h1V120h1V120h1V120h1V121h1V119h1V120h1V120h1V120h1V118h1V118h1V118h1V118h1V119h1V119h1V119h1V119h1V120h1V119h1V120h1V119h1V118h1V119h1V118h1V119h1V119h1V118h1V118h1V118h1V118h1V117h1V117h1V118h1V117h1V117h1V118h1V118h1V119h1V119h1V118h1V117h1V119h1V117h1V118h1V121h1V118h1V117h1V119h1V118h1V118h1V118h1V119h1V118h1V119h1V118h1V118h1V120h1V118h1V119h1V117h1V117h1V118h1V117h1V119h1V119h1V120h1V118h1V118h1V119h1V118h1V119h1V119h1V118h1V119h1V118h1V119h1V118h1V118h1V117h1V119h1V118h1V118h1V118h1V118h1V120h1V119h1V119h1V118h1V117h1V117h1V118h1V121h1V121h1V120h1V122h1V119h1V118h1V118h1V117h1V120h1V120h1V120h1V118h1V118h1V119h1V119h1V118h1V118h1V119h1V118h1V118h1V117h1V119h1V119h1V119h1V120h1V119h1V120h1V119h1V119h1V119h1V119h1V118h1V120h1V118h1V117h1V118h1V119h1V118h1V119h1V117h1V119h1V119h1V120h1V119h1V119h1V117h1V118h1V119h1V119h1V118h1V118h1V117h1V119h1V118h1V118h1V118h1V118h1V119h1V118h1V120h1V118h1V119h1V119h1V118h1V118h1V118h1V119h1V117h1V118h1V119h1V119h1V120h1V119h1V118h1V119h1V117h1V117h1V117h1V118h1V117h1V118h1V117h1V117h1V119h1V118h1V118h1V119h1V118h1V119h1V121h1V120h1V118h1V120h1V119h1V120h1V118h1V120h1V118h1V120h1V119h1V119h1V120h1V120h1V120h1V119h1V119h1V117h1V118h1V117h1V118h1V118h1V154h-1V154h-1V154h-1V153h-1V153h-1V154h-1V153h-1V152h-1V153h-1V154h-1V153h-1V153h-1V154h-1V154h-1V153h-1V154h-1V152h-1V151h-1V153h-1V153h-1V152h-1V152h-1V151h-1V152h-1V152h-1V151h-1V152h-1V152h-1V151h-1V153h-1V153h-1V152h-1V153h-1V153h-1V151h-1V153h-1V153h-1V153h-1V152h-1V154h-1V152h-1V153h-1V154h-1V152h-1V152h-1V154h-1V153h-1V152h-1V154h-1V152h-1V152h-1V153h-1V151h-1V153h-1V152h-1V154h-1V152h-1V154h-1V152h-1V154h-1V153h-1V152h-1V154h-1V152h-1V152h-1V153h-1V154h-1V152h-1V152h-1V153h-1V152h-1V151h-1V151h-1V152h-1V151h-1V154h-1V154h-1V154h-1V153h-1V154h-1V153h-1V154h-1V154h-1V153h-1V153h-1V151h-1V152h-1V152h-1V153h-1V152h-1V153h-1V153h-1V152h-1V153h-1V153h-1V153h-1V151h-1V151h-1V151h-1V152h-1V154h-1V154h-1V152h-1V154h-1V154h-1V152h-1V153h-1V150h-1V148h-1V149h-1V149h-1V153h-1V152h-1V152h-1V151h-1V152h-1V152h-1V151h-1V151h-1V152h-1V154h-1V154h-1V153h-1V152h-1V152h-1V152h-1V152h-1V152h-1V150h-1V151h-1V151h-1V152h-1V152h-1V152h-1V152h-1V154h-1V153h-1V155h-1V154h-1V153h-1V152h-1V153h-1V154h-1V153h-1V154h-1V153h-1V154h-1V153h-1V154h-1V152h-1V152h-1V152h-1V153h-1V153h-1V153h-1V154h-1V152h-1V152h-1V154h-1V154h-1V153h-1V154h-1V154h-1V153h-1V153h-1V153h-1V152h-1V152h-1V152h-1V151h-1V153h-1V152h-1V151h-1V152h-1V152h-1V152h-1V153h-1V153h-1V153h-1V154h-1V154h-1V153h-1V154h-1V153h-1V154h-1V153h-1V153h-1V153h-1V152h-1V153h-1V152h-1V152h-1V153h-1V152h-1V152h-1V153h-1V154h-1V152h-1V152h-1V153h-1V153h-1V153h-1V154h-1V152h-1V153h-1V152h-1V151h-1V152h-1V152h-1V152h-1V154h-1V153h-1V153h-1V154h-1V152h-1V152h-1V152h-1V151h-1V152h-1V152h-1V153h-1V153h-1V153h-1V153h-1V154h-1V154h-1V154h-1V153h-1V152h-1V152h-1V152h-1V154h-1V152h-1V151h-1V152h-1V154h-1V153h-1V155h-1V152h-1V152h-1V152h-1V152h-1V153h-1V153h-1V153h-1V153h-1V153h-1V152h-1V152h-1V153h-1V152h-1V153h-1V152h-1V151h-1V153h-1V154h-1V152h-1V154h-1V153h-1V153h-1V152h-1V152h-1V152h-1V151h-1V152h-1V152h-1V153h-1V151h-1V153h-1V152h-1V152h-1V153h-1V151h-1V151h-1V151h-1V152h-1V153h-1V153h-1V154h-1V152h-1V152h-1V152h-1V153h-1V152h-1V153h-1V153h-1V153h-1V152h-1V151h-1V151h-1V152h-1V154h-1V153h-1V154h-1V154h-1V152h-1V153h-1V152h-1V152h-1V153h-1V153h-1V153h-1V153h-1V152h-1V153h-1V152h-1V153h-1V154h-1V153h-1V154h-1V153h-1V152h-1V153h-1V152h-1V150h-1V152h-1V153h-1V152h-1V151h-1V152h-1V154h-1V152h-1V152h-1V152h-1V153h-1V154h-1V154h-1V152h-1V153h-1V152h-1V153h-1V153h-1V152h-1V151h-1V153h-1V153h-1V153h-1V153h-1V152h-1V153h-1V153h-1V154h-1V154h-1V152h-1V153h-1V152h-1V153h-1V153h-1V154h-1V154h-1V154h-1V152h-1V151h-1V152h-1V152h-1V153h-1V154h-1V154h-1V155h-1V152h-1V153h-1V151h-1V153h-1V152h-1V153h-1V152h-1V151h-1V152h-1V152h-1V152h-1V154h-1V152h-1V154h-1V155h-1V152h-1V153h-1V153h-1V152h-1V153h-1V153h-1V153h-1V153h-1V153h-1V154h-1V153h-1V154h-1V153h-1V152h-1V151h-1V152h-1V152h-1V153h-1V152h-1V152h-1V153h-1V152h-1V152h-1V153h-1V153h-1V152h-1V151h-1V151h-1V153h-1V152h-1V153h-1V152h-1V151h-1V151h-1V151h-1V153h-1V152h-1V152h-1V152h-1V154h-1V153h-1V153h-1V153h-1V154h-1V153h-1V153h-1V152h-1V152h-1V152h-1V153h-1V151h-1V151h-1V152h-1V151h-1V153h-1V151h-1V152h-1V150h-1V151h-1V152h-1V153h-1V152h-1V152h-1V152h-1V152h-1V153h-1V152h-1V155h-1V153h-1V153h-1V152h-1V151h-1V153h-1V151h-1V153h-1V151h-1V151h-1V151h-1V153h-1V153h-1V153h-1V152h-1V152h-1V154h-1V152h-1V153h-1V153h-1V152h-1V151h-1V151h-1V153h-1V151h-1V153h-1V152h-1V153h-1V155h-1V152h-1V153h-1V152h-1V154h-1V153h-1V152h-1V152h-1V153h-1V152h-1V153h-1V153h-1V152h-1V153h-1V152h-1V152h-1V153h-1V154h-1V153h-1V153h-1V152h-1V154h-1V154h-1V152h-1V152h-1V152h-1V153h-1V154h-1V154h-1V153h-1V153h-1V151h-1V152h-1V151h-1V151h-1V152h-1V151h-1V153h-1V154h-1V153h-1V153h-1V152h-1V153h-1V153h-1V152h-1V151h-1V153h-1V153h-1V151h-1V153h-1V154h-1V152h-1V154h-1V154h-1V154h-1V154h-1V152h-1V152h-1V152h-1V153h-1V153h-1V154h-1V154h-1V153h-1V154h-1V153h-1V152h-1V154h-1V152h-1V152h-1V152h-1V152h-1V151h-1V152h-1V152h-1V152h-1V153h-1V154h-1V152h-1V153h-1V152h-1V153h-1V153h-1V152h-1V151h-1V153h-1V152h-1V153h-1V152h-1V153h-1V153h-1V151h-1V151h-1V153h-1V153h-1V152h-1V154h-1V153h-1V154h-1V154h-1V153h-1V154h-1V155h-1V155h-1V155h-1V153h-1V153h-1V154h-1V152h-1V152h-1V153h-1V152h-1V154h-1V152h-1V154h-1V152h-1V152h-1V154h-1V153h-1V153h-1V154h-1V154h-1V152h-1V151h-1V151h-1V152h-1V153h-1V154h-1V153h-1V153h-1V153h-1V153h-1V154h-1V141h-1V141h-1V140h-1V139h-1V141h-1V140h-1V141h-1V142h-1V140h-1V140h-1V141h-1V139h-1V141h-1V140h-1V138h-1V140h-1V140h-1V152h-1V152h-1V153h-1V154h-1V153h-1V154h-1V152h-1V153h-1V152h-1V153h-1V154h-1V153h-1V152h-1V151h-1V152h-1V151h-1V153h-1V151h-1V152h-1V153h-1V154h-1V152h-1V152h-1V154h-1V152h-1V152h-1V154h-1V153h-1V154h-1V154h-1V153h-1V154h-1V153h-1V154h-1V154h-1V153h-1V152h-1V153h-1V154h-1V153h-1V154h-1V153h-1V153h-1V152h-1V151h-1V152h-1V152h-1V153h-1V152h-1V152h-1V151h-1V151h-1V152h-1V153h-1V152h-1V151h-1V152h-1V153h-1V151h-1V151h-1V153h-1V151h-1V152h-1V153h-1V152h-1V153h-1V152h-1V153h-1V153h-1V151h-1V151h-1V151h-1V152h-1V153h-1V152h-1V153h-1V153h-1V152h-1V152h-1V153h-1V153h-1V153h-1V153h-1V153h-1V154h-1V154h-1V154h-1V155h-1V155h-1V153h-1V153h-1V152h-1V153h-1V153h-1V153h-1V153h-1V153h-1V153h-1V152h-1V154h-1V153h-1V154h-1V154h-1V153h-1V153h-1V155h-1V154h-1V154h-1V155h-1V154h-1V155h-1V154h-1V152h-1V153h-1V152h-1V153h-1V154h-1V152h-1V153h-1V153h-1V154h-1V154h-1V155h-1V154h-1V153h-1V153h-1V152h-1V153h-1V154h-1V153h-1V153h-1V153h-1V152h-1V152h-1V152h-1V153h-1V152h-1V153h-1V153h-1V154h-1V153h-1V154h-1V153h-1V154h-1V153h-1V152h-1V152h-1V151h-1V153h-1V152h-1V152h-1V153h-1V153h-1V151h-1V152h-1V154h-1V152h-1V153h-1V154h-1V154h-1V154h-1V154h-1V152h-1V153h-1V154h-1V154h-1V153h-1V154h-1V152h-1V153h-1V151h-1V154h-1V154h-1V154h-1V153h-1V153h-1V153h-1V151h-1V151h-1V152h-1V152h-1V152h-1V153h-1V153h-1V152h-1V152h-1V152h-1V152h-1V152h-1V152h-1V152h-1V153h-1V152h-1V154h-1V154h-1V154h-1V153h-1V154h-1V152h-1V153h-1V154h-1V153h-1V154h-1V153h-1V154h-1V153h-1V154h-1V154h-1V153h-1V153h-1V153h-1V151h-1V153h-1V153h-1V154h-1V152h-1V153h-1V154h-1V153h-1V154h-1V154h-1V153h-1V152h-1V153h-1V152h-1V153h-1V153h-1V152h-1V153h-1V152h-1V154h-1V153h-1V153h-1V152h-1V153h-1V153h-1V153h-1V152h-1V152h-1V154h-1V154h-1V154h-1V152h-1V153h-1V153h-1V151h-1V151h-1V151h-1V151h-1V152h-1V153h-1V152h-1V154h-1V152h-1V153h-1V153h-1V152h-1V152h-1V152h-1V152h-1V153h-1V153h-1V152h-1V153h-1V153h-1V152h-1V152h-1V153h-1V153h-1V153h-1V152h-1V152h-1V153h-1V152h-1V152h-1V152h-1V152h-1V153h-1V152h-1V153h-1V153h-1V153h-1V154h-1V154h-1V154h-1V154h-1V153h-1V153h-1V154h-1V153h-1V153h-1V153h-1V152h-1V153h-1V153h-1V152h-1V152h-1V151h-1V152h-1V151h-1V151h-1V153h-1V151h-1V153h-1V151h-1V152h-1V152h-1V153h-1V154h-1V153h-1V155h-1V152h-1V153h-1V154h-1V153h-1V152h-1V153h-1V152h-1V152h-1V154h-1V153h-1V153h-1V153h-1V153h-1V152h-1V152h-1V153h-1V153h-1V151h-1V152h-1V152h-1V152h-1V151h-1V152h-1V154h-1V154h-1V153h-1V153h-1V153h-1V153h-1V153h-1V151h-1V152h-1V153h-1V153h-1V154h-1V152h-1V153h-1V153h-1V153h-1V151h-1V151h-1V151h-1V153h-1V151h-1V151h-1V152h-1V153h-1V152h-1V153h-1V153h-1V153h-1V151h-1V152h-1V153h-1V152h-1V152h-1V150h-1V152h-1V152h-1V153h-1V151h-1V152h-1V151h-1V150h-1V152h-1V153h-1V153h-1V153h-1V154h-1V153h-1V151h-1V152h-1V151h-1V154h-1V153h-1V154h-1V153h-1V153h-1V153h-1V151h-1V152h-1V151h-1V150h-1V152h-1V152h-1V152h-1V154h-1V154h-1V152h-1V153h-1V153h-1V152h-1V152h-1V152h-1V154h-1V153h-1V154h-1V153h-1V151h-1V151h-1V151h-1V153h-1V154h-1V153h-1V154h-1V153h-1V153h-1V152h-1V153h-1V152h-1V153h-1V153h-1V155h-1V154h-1V153h-1V155h-1V152h-1V153h-1V153h-1V152h-1V151h-1V153h-1V153h-1V155h-1V154h-1V154h-1V152h-1V153h-1V151h-1V150h-1V151h-1V150h-1V153h-1V151h-1V154h-1V152h-1V153h-1V152h-1V153h-1V154h-1V153h-1V152h-1V154h-1V154h-1V154h-1V154h-1V153h-1V153h-1V153h-1V154h-1V153h-1V152h-1V153h-1V152h-1V153h-1V153h-1V154h-1V153h-1V152h-1V153h-1V153h-1V152h-1V153h-1V154h-1V154h-1V153h-1V153h-1V153h-1V153h-1V152h-1V152h-1V151h-1V152h-1V153h-1V152h-1V154h-1V154h-1V152h-1V152h-1V152h-1V151h-1V153h-1V151h-1V152h-1V152h-1V153h-1V153h-1V153h-1V152h-1V153h-1V153h-1V151h-1V153h-1V151h-1V152h-1V153h-1V154h-1V152h-1V151h-1V153h-1V152h-1V154h-1V154h-1V153h-1V153h-1V152h-1V152h-1V151h-1V153h-1V153h-1V153h-1V152h-1V152h-1V154h-1V153h-1V153h-1V153h-1V153h-1V154h-1V152h-1V154h-1V153h-1V152h-1V151h-1V151h-1V152h-1V151h-1V151h-1V151h-1V152h-1V154h-1V154h-1V153h-1V153h-1V154h-1V152h-1V153h-1V152h-1V153h-1V151h-1V151h-1V152h-1V151h-1V151h-1V152h-1V153h-1V153h-1V152h-1V152h-1V152h-1V152h-1V154h-1V153h-1V154h-1V153h-1V153h-1V154h-1V152h-1V154h-1V154h-1V154h-1V154h-1V153h-1V153h-1V154h-1V153h-1V153h-1V152h-1V151h-1V152h-1V152h-1V152h-1V153h-1V154h-1V152h-1V154h-1V154h-1V153h-1V154h-1V154h-1V153h-1V153h-1V154h-1V154h-1V151h-1V153h-1V152h-1V151h-1V151h-1V153h-1V153h-1V154h-1V153h-1V152h-1V153h-1V153h-1V152h-1V153h-1V154h-1V153h-1V153h-1V154h-1V154h-1V152h-1V154h-1V152h-1V152h-1V153h-1V151h-1V153h-1V153h-1V153h-1V153h-1V153h-1V152h-1V152h-1V153h-1V153h-1V153h-1V153h-1V153h-1V152h-1V154h-1V153h-1V153h-1V153h-1V154h-1V155h-1V153h-1V153h-1V154h-1V153h-1V153h-1V154h-1V154h-1V152h-1V153h-1V152h-1V153h-1V151h-1V153h-1V153h-1V153h-1V153h-1V153h-1V153h-1V153h-1V152h-1V151h-1V152h-1V152h-1V152h-1V153h-1V152h-1V152h-1V152h-1V154h-1V153h-1V152h-1V154h-1V153h-1V153h-1V153h-1V154h-1V152h-1V153h-1V152h-1V151h-1V152h-1V151h-1V151h-1V153h-1V154h-1V154h-1V152h-1V154h-1V154h-1V153h-1V152h-1V153h-1V153h-1V153h-1V153h-1V152h-1V153h-1V152h-1V153h-1V153h-1V152h-1V153h-1V153h-1V155h-1V154h-1V154h-1V154h-1V152h-1V153h-1V153h-1V152h-1V151h-1V151h-1V154h-1V153h-1V154h-1V153h-1V154h-1V154h-1V152h-1V152h-1V153h-1V152h-1V152h-1V153h-1V152h-1V153h-1V152h-1V152h-1V152h-1V153h-1V154h-1V153h-1V154h-1V152h-1V153h-1V154h-1V152h-1V152h-1V154h-1V151h-1V151h-1V152h-1V152h-1V152h-1V151h-1V152h-1V151h-1V151h-1V152h-1V154h-1V154h-1V152h-1V153h-1V152h-1V151h-1V152h-1V153h-1V152h-1V153h-1V153h-1V153h-1V152h-1V152h-1V154h-1V152h-1V154h-1V154h-1V153h-1V154h-1V152h-1V153h-1V154h-1V152h-1V153h-1V154h-1V153h-1V154h-1V154h-1V153h-1V153h-1V153h-1V153h-1V153h-1V154h-1V154h-1V152h-1V153h-1V152h-1V152h-1V153h-1V153h-1V152h-1V153h-1V153h-1V152h-1V151h-1V151h-1V152h-1V153h-1V151h-1V150h-1V151h-1V151h-1V151h-1V153h-1V152h-1V152h-1V152h-1V152h-1V153h-1V152h-1V150h-1V149h-1V151h-1V151h-1V150h-1V151h-1V150h-1V151h-1V151h-1V151h-1V151h-1V152h-1V152h-1V150h-1V150h-1V150h-1V149h-1V149h-1V150h-1V150h-1V150h-1V150h-1V149h-1V150h-1V150h-1V151h-1V149h-1V148h-1V150h-1V149h-1V149h-1V149h-1V148h-1V150h-1V149h-1V150h-1V150h-1V150h-1V150h-1V150h-1V149h-1V151h-1V149h-1V151h-1V151h-1V150h-1V150h-1V149h-1Z"/><path fill="#3232c8" d="M0,291V291h1V290h1V292h1V292h1V293h1V287h1V294h1V295h1V293h1V295h1V295h1V291h1V291h1V285h1V289h1V286h1V287h1V284h1V287h1V288h1V289h1V290h1V297h1V296h1V284h1V295h1V282h1V291h1V296h1V279h1V294h1V294h1V283h1V289h1V289h1V289h1V293h1V288h1V288h1V292h1V291h1V282h1V287h1V283h1V284h1V295h1V296h1V298h1V292h1V285h1V283h1V276h1V276h1V273h1V272h1V286h1V286h1V279h1V290h1V273h1V291h1V291h1V291h1V278h1V277h1V280h1V291h1V282h1V283h1V278h1V285h1V282h1V278h1V274h1V274h1V264h1V274h1V273h1V275h1V288h1V292h1V290h1V279h1V289h1V292h1V273h1V281h1V281h1V279h1V279h1V287h1V283h1V284h1V276h1V281h1V280h1V281h1V293h1V276h1V289h1V283h1V284h1V279h1V279h1V287h1V286h1V286h1V283h1V288h1V283h1V288h1V285h1V282h1V291h1V284h1V282h1V276h1V287h1V293h1V284h1V291h1V289h1V289h1V282h1V287h1V283h1V284h1V290h1V288h1V288h1V283h1V286h1V286h1V280h1V281h1V289h1V282h1V281h1V281h1V291h1V290h1V288h1V272h1V278h1V289h1V281h1V276h1V278h1V278h1V275h1V280h1V276h1V281h1V284h1V279h1V280h1V269h1V282h1V282h1V274h1V283h1V277h1V282h1V270h1V275h1V279h1V282h1V277h1V288h1V283h1V290h1V290h1V288h1V277h1V287h1V287h1V282h1V291h1V281h1V290h1V291h1V284h1V287h1V283h1V284h1V288h1V281h1V287h1V288h1V289h1V287h1V292h1V288h1V287h1V278h1V277h1V288h1V293h1V285h1V284h1V276h1V289h1V288h1V272h1V287h1V287h1V288h1V289h1V292h1V281h1V274h1V276h1V276h1V285h1V285h1V278h1V274h1V274h1V276h1V284h1V290h1V286h1V287h1V278h1V277h1V288h1V278h1V279h1V281h1V288h1V288h1V282h1V282h1V289h1V280h1V287h1V286h1V286h1V282h1V274h1V273h1V278h1V290h1V287h1V287h1V282h1V281h1V281h1V280h1V277h1V280h1V281h1V280h1V283h1V283h1V277h1V292h1V281h1V282h1V293h1V292h1V289h1V290h1V272h1V287h1V284h1V284h1V288h1V277h1V268h1V278h1V275h1V280h1V280h1V281h1V275h1V287h1V284h1V284h1V285h1V279h1V282h1V279h1V290h1V291h1V281h1V278h1V283h1V282h1V291h1V283h1V284h1V279h1V284h1V285h1V290h1V288h1V288h1V278h1V284h1V289h1V275h1V290h1V291h1V282h1V289h1V290h1V285h1V284h1V286h1V282h1V283h1V290h1V280h1V287h1V287h1V279h1V284h1V280h1V279h1V277h1V268h1V287h1V285h1V281h1V288h1V279h1V279h1V287h1V287h1V285h1V284h1V285h1V283h1V284h1V281h1V281h1V279h1V280h1V282h1V283h1V288h1V286h1V290h1V292h1V291h1V291h1V286h1V289h1V279h1V283h1V287h1V286h1V280h1V279h1V279h1V288h1V280h1V281h1V289h1V293h1V293h1V277h1V277h1V289h1V292h1V272h1V273h1V285h1V292h1V280h1V287h1V268h1V281h1V281h1V279h1V291h1V277h1V272h1V276h1V281h1V288h1V278h1V272h1V272h1V289h1V288h1V289h1V281h1V281h1V288h1V291h1V288h1V281h1V292h1V280h1V291h1V291h1V282h1V285h1V282h1V287h1V283h1V280h1V283h1V288h1V272h1V277h1V287h1V288h1V283h1V283h1V284h1V282h1V275h1V275h1V284h1V283h1V265h1V284h1V268h1V267h1V285h1V272h1V292h1V283h1V283h1V286h1V285h1V285h1V279h1V274h1V290h1V282h1V282h1V284h1V284h1V282h1V290h1V279h1V288h1V280h1V290h1V284h1V285h1V278h1V293h1V291h1V293h1V292h1V292h1V278h1V285h1V284h1V289h1V279h1V279h1V282h1V283h1V281h1V280h1V286h1V285h1V289h1V285h1V282h1V281h1V288h1V289h1V291h1V278h1V281h1V281h1V290h1V290h1V276h1V268h1V268h1V284h1V268h1V280h1V281h1V267h1V288h1V270h1V285h1V284h1V273h1V280h1V282h1V286h1V286h1V279h1V282h1V291h1V291h1V289h1V286h1V285h1V285h1V285h1V290h1V282h1V283h1V288h1V290h1V290h1V286h1V281h1V289h1V288h1V291h1V292h1V287h1V287h1V288h1V287h1V291h1V290h1V285h1V290h1V292h1V282h1V288h1V291h1V280h1V279h1V281h1V289h1V290h1V291h1V289h1V278h1V281h1V282h1V281h1V280h1V286h1V286h1V292h1V279h1V280h1V285h1V286h1V280h1V286h1V284h1V288h1V281h1V270h1V282h1V282h1V279h1V281h1V276h1V283h1V282h1V285h1V284h1V277h1V284h1V284h1V285h1V283h1V269h1V270h1V277h1V286h1V279h1V277h1V276h1V290h1V290h1V291h1V289h1V290h1V291h1V284h1V281h1V289h1V279h1V279h1V276h1V282h1V281h1V281h1V284h1V284h1V291h1V291h1V275h1V274h1V277h1V278h1V278h1V278h1V291h1V281h1V282h1V277h1V277h1V284h1V283h1V278h1V278h1V283h1V287h1V272h1V284h1V285h1V272h1V292h1V284h1V273h1V275h1V284h1V278h1V283h1V284h1V283h1V292h1V288h1V285h1V271h1V270h1V283h1V282h1V275h1V285h1V285h1V282h1V285h1V275h1V285h1V285h1V281h1V262h1V288h1V262h1V263h1V268h1V280h1V289h1V274h1V275h1V273h1V288h1V283h1V279h1V277h1V277h1V278h1V290h1V290h1V288h1V279h1V282h1V281h1V285h1V280h1V282h1V289h1V288h1V285h1V288h1V280h1V292h1V285h1V286h1V286h1V289h1V279h1V278h1V281h1V291h1V291h1V285h1V284h1V290h1V287h1V273h1V282h1V284h1V278h1V279h1V285h1V286h1V277h1V280h1V291h1V280h1V276h1V291h1V282h1V284h1V287h1V284h1V286h1V280h1V286h1V287h1V288h1V283h1V285h1V289h1V290h1V290h1V284h1V285h1V284h1V289h1V280h1V279h1V270h1V289h1V278h1V280h1V291h1V285h1V280h1V286h1V280h1V280h1V281h1V281h1V291h1V290h1V292h1V279h1V291h1V291h1V280h1V283h1V283h1V287h1V287h1V286h1V282h1V282h1V293h1V283h1V278h1V286h1V285h1V288h1V282h1V293h1V293h1V287h1V277h1V278h1V281h1V294h1V291h1V288h1V289h1V284h1V281h1V281h1V291h1V293h1V288h1V279h1V285h1V285h1V284h1V282h1V282h1V280h1V274h1V276h1V277h1V288h1V274h1V291h1V290h1V288h1V288h1V285h1V285h1V281h1V282h1V286h1V291h1V293h1V293h1V292h1V287h1V278h1V280h1V280h1V282h1V279h1V284h1V290h1V287h1V284h1V284h1V280h1V280h1V288h1V287h1V286h1V284h1V284h1V291h1V284h1V283h1V283h1V284h1V280h1V290h1V289h1V271h1V279h1V279h1V285h1V283h1V284h1V286h1V285h1V289h1V286h1V290h1V288h1V273h1V288h1V289h1V275h1V284h1V285h1V285h1V287h1V290h1V275h1V286h1V285h1V285h1V288h1V284h1V284h1V283h1V285h1V274h1V274h1V284h1V290h1V281h1V282h1V281h1V274h1V274h1V279h1V286h1V288h1V279h1V284h1V289h1V273h1V289h1V290h1V286h1V286h1V286h1V283h1V291h1V292h1V288h1V291h1V286h1V287h1V287h1V276h1V276h1V289h1V288h1V289h1V274h1V262h1V278h1V271h1V286h1V285h1V284h1V285h1V282h1V283h1V289h1V282h1V281h1V277h1V275h1V283h1V284h1V281h1V281h1V288h1V288h1V290h1V289h1V276h1V287h1V288h1V282h1V288h1V288h1V281h1V279h1V280h1V283h1V284h1V287h1V278h1V286h1V289h1V289h1V289h1V290h1V271h1V271h1V289h1V290h1V289h1V291h1V280h1V291h1V288h1V289h1V284h1V285h1V277h1V278h1V284h1V284h1V291h1V285h1V283h1V290h1V290h1V285h1V286h1V288h1V281h1V288h1V288h1V284h1V284h1V287h1V270h1V271h1V280h1V289h1V290h1V279h1V283h1V284h1V286h1V285h1V283h1V290h1V284h1V291h1V291h1V285h1V292h1V291h1V281h1V289h1V280h1V286h1V285h1V283h1V282h1V288h1V292h1V286h1V278h1V283h1V277h1V276h1V284h1V278h1V282h1V273h1V288h1V291h1V287h1V278h1V278h1V281h1V286h1V283h1V281h1V282h1V280h1V285h1V287h1V288h1V288h1V289h1V289h1V281h1V285h1V286h1V285h1V284h1V284h1V286h1V290h1V288h1V289h1V290h1V290h1V290h1V289h1V288h1V286h1V286h1V277h1V277h1V276h1V285h1V283h1V283h1V280h1V283h1V282h1V278h1V290h1V289h1V279h1V278h1V285h1V280h1V292h1V271h1V278h1V281h1V284h1V267h1V267h1V281h1V273h1V273h1V290h1V277h1V287h1V265h1V266h1V284h1V284h1V280h1V279h1V289h1V290h1V277h1V283h1V280h1V286h1V276h1V290h1V290h1V282h1V281h1V283h1V283h1V277h1V279h1V292h1V282h1V281h1V284h1V279h1V291h1V277h1V276h1V275h1V283h1V283h1V293h1V286h1V286h1V292h1V285h1V293h1V293h1V292h1V293h1V276h1V292h1V292h1V272h1V288h1V287h1V280h1V277h1V277h1V283h1V284h1V281h1V283h1V282h1V275h1V288h1V289h1V283h1V284h1V282h1V283h1V288h1V291h1V286h1V284h1V284h1V278h1V284h1V284h1V286h1V290h1V289h1V290h1V284h1V285h1V292h1V292h1V290h1V289h1V289h1V286h1V283h1V281h1V283h1V273h1V273h1V284h1V288h1V271h1V286h1V286h1V291h1V285h1V275h1V274h1V284h1V291h1V288h1V289h1V282h1V270h1V288h1V289h1V286h1V289h1V290h1V284h1V287h1V284h1V286h1V288h1V286h1V288h1V279h1V280h1V284h1V293h1V277h1V288h1V277h1V277h1V276h1V291h1V270h1V292h1V290h1V269h1V267h1V268h1V279h1V279h1V280h1V280h1V279h1V289h1V288h1V275h1V285h1V282h1V281h1V289h1V286h1V288h1V287h1V287h1V287h1V278h1V281h1V279h1V284h1V288h1V284h1V271h1V271h1V278h1V281h1V275h1V272h1V290h1V290h1V277h1V292h1V282h1V289h1V286h1V277h1V278h1V288h1V288h1V290h1V285h1V284h1V282h1V282h1V281h1V287h1V281h1V287h1V286h1V287h1V286h1V279h1V278h1V286h1V280h1V290h1V290h1V283h1V288h1V278h1V287h1V286h1V285h1V285h1V290h1V290h1V288h1V279h1V279h1V284h1V285h1V283h1V282h1V290h1V284h1V284h1V287h1V281h1V281h1V270h1V270h1V285h1V283h1V282h1V277h1V286h1V269h1V285h1V287h1V283h1V291h1V280h1V278h1V273h1V279h1V288h1V287h1V283h1V287h1V287h1V286h1V284h1V284h1V284h1V286h1V286h1V291h1V287h1V287h1V287h1V283h1V286h1V286h1V286h1V290h1V284h1V283h1V282h1V291h1V284h1V283h1V289h1V288h1V289h1V288h1V287h1V280h1V279h1V279h1V283h1V284h1V287h1V274h1V291h1V287h1V280h1V279h1V284h1V287h1V289h1V284h1V287h1V286h1V285h1V287h1V287h1V281h1V292h1V291h1V288h1V285h1V285h1V285h1V283h1V286h1V281h1V282h1V292h1V289h1V284h1V287h1V281h1V282h1V287h1V285h1V281h1V288h1V286h1V287h1V287h1V289h1V286h1V286h1V287h1V286h1V279h1V286h1V284h1V284h1V285h1V282h1V285h1V281h1V280h1V286h1V284h1V302h1V305h1V299h1V304h1V316h1V312h1V311h1V310h1V285h1V278h1V275h1V290h1V286h1V281h1V289h1V289h1V283h1V278h1V281h1V291h1V291h1V281h1V281h1V283h1V290h1V279h1V289h1V290h1V290h1V290h1V291h1V270h1V288h1V274h1V273h1V289h1V288h1V280h1V280h1V287h1V275h1V279h1V287h1V278h1V270h1V270h1V281h1V278h1V280h1V290h1V277h1V275h1V286h1V282h1V282h1V292h1V277h1V283h1V282h1V277h1V281h1V285h1V285h1V281h1V268h1V278h1V275h1V282h1V279h1V277h1V280h1V281h1V281h1V291h1V292h1V280h1V283h1V265h1V281h1V281h1V283h1V273h1V290h1V281h1V280h1V280h1V285h1V282h1V290h1V281h1V290h1V282h1V283h1V278h1V286h1V277h1V282h1V282h1V281h1V280h1V279h1V283h1V276h1V283h1V283h1V287h1V281h1V289h1V289h1V291h1V286h1V290h1V289h1V288h1V400h-1V408h-1V413h-1V412h-1V394h-1V398h-1V407h-1V397h-1V397h-1V399h-1V399h-1V396h-1V394h-1V414h-1V398h-1V400h-1V400h-1V403h-1V399h-1V392h-1V417h-1V417h-1V410h-1V408h-1V413h-1V416h-1V415h-1V398h-1V399h-1V410h-1V405h-1V390h-1V404h-1V404h-1V404h-1V389h-1V391h-1V399h-1V398h-1V406h-1V406h-1V405h-1V405h-1V398h-1V393h-1V394h-1V408h-1V397h-1V397h-1V398h-1V398h-1V403h-1V409h-1V398h-1V397h-1V400h-1V403h-1V403h-1V391h-1V392h-1V397h-1V400h-1V397h-1V398h-1V405h-1V399h-1V400h-1V406h-1V407h-1V410h-1V407h-1V406h-1V402h-1V410h-1V412h-1V405h-1V412h-1V397h-1V407h-1V393h-1V394h-1V393h-1V394h-1V398h-1V395h-1V396h-1V409h-1V391h-1V389h-1V402h-1V401h-1V392h-1V392h-1V400h-1V400h-1V403h-1V401h-1V394h-1V394h-1V408h-1V394h-1V395h-1V400h-1V400h-1V399h-1V404h-1V367h-1V371h-1V371h-1V367h-1V378h-1V387h-1V383h-1V383h-1V386h-1V394h-1V390h-1V395h-1V399h-1V398h-1V389h-1V395h-1V392h-1V398h-1V404h-1V407h-1V401h-1V401h-1V393h-1V396h-1V397h-1V393h-1V399h-1V404h-1V403h-1V405h-1V404h-1V395h-1V411h-1V394h-1V401h-1V395h-1V400h-1V393h-1V401h-1V403h-1V394h-1V404h-1V401h-1V408h-1V399h-1V399h-1V398h-1V402h-1V400h-1V398h-1V398h-1V399h-1V405h-1V403h-1V403h-1V403h-1V401h-1V399h-1V402h-1V414h-1V414h-1V416h-1V404h-1V402h-1V402h-1V400h-1V400h-1V396h-1V396h-1V411h-1V399h-1V398h-1V395h-1V395h-1V398h-1V392h-1V405h-1V395h-1V404h-1V400h-1V401h-1V409h-1V399h-1V402h-1V401h-1V397h-1V396h-1V415h-1V414h-1V391h-1V390h-1V391h-1V413h-1V393h-1V400h-1V409h-1V390h-1V392h-1V402h-1V403h-1V397h-1V397h-1V401h-1V395h-1V405h-1V404h-1V406h-1V406h-1V406h-1V403h-1V396h-1V408h-1V394h-1V400h-1V408h-1V399h-1V396h-1V395h-1V400h-1V397h-1V396h-1V396h-1V391h-1V397h-1V412h-1V398h-1V397h-1V401h-1V402h-1V403h-1V398h-1V406h-1V406h-1V395h-1V393h-1V396h-1V396h-1V393h-1V398h-1V394h-1V398h-1V399h-1V398h-1V396h-1V397h-1V396h-1V398h-1V405h-1V405h-1V415h-1V402h-1V409h-1V410h-1V398h-1V398h-1V402h-1V392h-1V406h-1V394h-1V414h-1V415h-1V405h-1V398h-1V401h-1V398h-1V393h-1V401h-1V408h-1V404h-1V413h-1V396h-1V403h-1V392h-1V402h-1V403h-1V401h-1V402h-1V395h-1V409h-1V392h-1V401h-1V401h-1V391h-1V401h-1V406h-1V400h-1V393h-1V397h-1V391h-1V391h-1V393h-1V392h-1V395h-1V411h-1V392h-1V406h-1V401h-1V392h-1V391h-1V393h-1V393h-1V400h-1V402h-1V403h-1V394h-1V401h-1V400h-1V408h-1V396h-1V401h-1V390h-1V392h-1V396h-1V395h-1V397h-1V408h-1V395h-1V408h-1V399h-1V404h-1V403h-1V403h-1V406h-1V398h-1V408h-1V391h-1V391h-1V401h-1V410h-1V406h-1V393h-1V400h-1V399h-1V396h-1V408h-1V410h-1V411h-1V410h-1V409h-1V414h-1V411h-1V407h-1V407h-1V405h-1V404h-1V401h-1V392h-1V392h-1V395h-1V396h-1V398h-1V397h-1V399h-1V399h-1V399h-1V401h-1V400h-1V398h-1V391h-1V392h-1V397h-1V397h-1V398h-1V395h-1V395h-1V397h-1V396h-1V392h-1V392h-1V401h-1V406h-1V388h-1V405h-1V405h-1V410h-1V410h-1V412h-1V411h-1V391h-1V399h-1V400h-1V404h-1V404h-1V416h-1V390h-1V393h-1V412h-1V409h-1V403h-1V408h-1V391h-1V402h-1V398h-1V405h-1V391h-1V401h-1V403h-1V404h-1V404h-1V409h-1V399h-1V398h-1V408h-1V415h-1V398h-1V399h-1V406h-1V402h-1V403h-1V403h-1V409h-1V402h-1V399h-1V399h-1V402h-1V395h-1V398h-1V405h-1V405h-1V406h-1V389h-1V402h-1V403h-1V410h-1V402h-1V414h-1V403h-1V397h-1V409h-1V399h-1V393h-1V393h-1V400h-1V394h-1V395h-1V397h-1V412h-1V395h-1V403h-1V402h-1V404h-1V404h-1V401h-1V395h-1V405h-1V396h-1V410h-1V390h-1V390h-1V403h-1V408h-1V397h-1V393h-1V402h-1V401h-1V402h-1V397h-1V405h-1V416h-1V408h-1V398h-1V398h-1V410h-1V409h-1V398h-1V398h-1V395h-1V404h-1V398h-1V403h-1V395h-1V407h-1V391h-1V391h-1V416h-1V408h-1V397h-1V396h-1V398h-1V397h-1V392h-1V396h-1V404h-1V398h-1V396h-1V391h-1V406h-1V406h-1V393h-1V406h-1V405h-1V397h-1V390h-1V395h-1V395h-1V394h-1V398h-1V392h-1V393h-1V403h-1V397h-1V392h-1V392h-1V392h-1V395h-1V402h-1V394h-1V395h-1V394h-1V395h-1V402h-1V393h-1V393h-1V401h-1V405h-1V394h-1V394h-1V403h-1V403h-1V391h-1V405h-1V393h-1V396h-1V394h-1V406h-1V395h-1V399h-1V401h-1V395h-1V403h-1V403h-1V403h-1V395h-1V394h-1V395h-1V395h-1V402h-1V399h-1V398h-1V394h-1V395h-1V402h-1V399h-1V400h-1V392h-1V395h-1V394h-1V397h-1V395h-1V394h-1V400h-1V397h-1V397h-1V398h-1V400h-1V400h-1V394h-1V393h-1V395h-1V399h-1V399h-1V398h-1V393h-1V394h-1V403h-1V403h-1V412h-1V396h-1V397h-1V416h-1V415h-1V398h-1V404h-1V398h-1V394h-1V400h-1V403h-1V411h-1V417h-1V416h-1V405h-1V403h-1V395h-1V395h-1V392h-1V405h-1V392h-1V406h-1V407h-1V398h-1V399h-1V406h-1V389h-1V390h-1V403h-1V394h-1V394h-1V404h-1V418h-1V401h-1V402h-1V394h-1V395h-1V395h-1V396h-1V414h-1V414h-1V393h-1V413h-1V414h-1V404h-1V408h-1V408h-1V401h-1V404h-1V402h-1V414h-1V416h-1V406h-1V400h-1V391h-1V409h-1V394h-1V394h-1V416h-1V407h-1V405h-1V401h-1V419h-1V420h-1V404h-1V402h-1V399h-1V392h-1V404h-1V406h-1V406h-1V400h-1V403h-1V395h-1V395h-1V406h-1V402h-1V401h-1V394h-1V394h-1V404h-1V404h-1V402h-1V409h-1V397h-1V398h-1V411h-1V401h-1V392h-1V392h-1V394h-1V399h-1V399h-1V393h-1V403h-1V401h-1V402h-1V392h-1V400h-1V398h-1V402h-1V398h-1V391h-1V392h-1V391h-1V403h-1V395h-1V391h-1V393h-1V395h-1V401h-1V401h-1V389h-1V401h-1V401h-1V394h-1V402h-1V400h-1V398h-1V398h-1V405h-1V406h-1V407h-1V405h-1V399h-1V399h-1V398h-1V410h-1V410h-1V395h-1V407h-1V394h-1V394h-1V400h-1V406h-1V415h-1V415h-1V398h-1V417h-1V400h-1V400h-1V401h-1V401h-1V407h-1V401h-1V401h-1V413h-1V414h-1V399h-1V408h-1V409h-1V418h-1V392h-1V402h-1V401h-1V405h-1V397h-1V396h-1V392h-1V393h-1V401h-1V391h-1V417h-1V405h-1V403h-1V416h-1V417h-1V407h-1V407h-1V401h-1V417h-1V408h-1V408h-1V403h-1V406h-1V416h-1V398h-1V398h-1V398h-1V408h-1V404h-1V404h-1V416h-1V396h-1V409h-1V401h-1V402h-1V404h-1V392h-1V396h-1V395h-1V405h-1V401h-1V390h-1V396h-1V390h-1V414h-1V397h-1V397h-1V402h-1V402h-1V403h-1V403h-1V392h-1V396h-1V408h-1V408h-1V401h-1V399h-1V407h-1V407h-1V406h-1V408h-1V399h-1V401h-1V410h-1V408h-1V411h-1V411h-1V408h-1V396h-1V403h-1V390h-1V391h-1V402h-1V402h-1V412h-1V412h-1V412h-1V397h-1V395h-1V394h-1V401h-1V400h-1V399h-1V399h-1V394h-1V395h-1V395h-1V390h-1V390h-1V405h-1V397h-1V407h-1V397h-1V392h-1V396h-1V395h-1V408h-1V401h-1V401h-1V402h-1V409h-1V395h-1V395h-1V393h-1V392h-1V403h-1V394h-1V399h-1V401h-1V401h-1V396h-1V397h-1V398h-1V401h-1V401h-1V391h-1V390h-1V391h-1V398h-1V391h-1V392h-1V394h-1V395h-1V394h-1V403h-1V394h-1V405h-1V404h-1V401h-1V409h-1V409h-1V399h-1V404h-1V397h-1V398h-1V410h-1V399h-1V400h-1V393h-1V394h-1V415h-1V408h-1V409h-1V394h-1V396h-1V394h-1V396h-1V396h-1V412h-1V413h-1V401h-1V390h-1V392h-1V399h-1V399h-1V402h-1V402h-1V408h-1V406h-1V406h-1V402h-1V402h-1V399h-1V400h-1V403h-1V396h-1V394h-1V394h-1V403h-1V404h-1V395h-1V390h-1V400h-1V390h-1V402h-1V402h-1V393h-1V406h-1V398h-1V403h-1V415h-1V415h-1V406h-1V401h-1V415h-1V414h-1V392h-1V400h-1V405h-1V406h-1V392h-1V394h-1V408h-1V400h-1V406h-1V395h-1V394h-1V401h-1V400h-1V403h-1V391h-1V409h-1V409h-1V403h-1V407h-1V389h-1V417h-1V399h-1V406h-1V402h-1V403h-1V398h-1V398h-1V412h-1V413h-1V406h-1V416h-1V416h-1V395h-1V402h-1V403h-1V420h-1V404h-1V395h-1V401h-1V413h-1V413h-1V411h-1V411h-1V406h-1V406h-1V395h-1V416h-1V394h-1V393h-1V408h-1V406h-1V401h-1V401h-1V403h-1V415h-1V415h-1V412h-1V408h-1V399h-1V405h-1V396h-1V411h-1V394h-1V416h-1V403h-1V407h-1V412h-1V413h-1V401h-1V392h-1V395h-1V396h-1V397h-1V391h-1V392h-1V396h-1V408h-1V392h-1V392h-1V401h-1V405h-1V405h-1V399h-1V396h-1V411h-1V394h-1V408h-1V400h-1V394h-1V390h-1V394h-1V395h-1V393h-1V401h-1V399h-1V400h-1V391h-1V400h-1V404h-1V413h-1V409h-1V403h-1V402h-1V391h-1V391h-1V397h-1V397h-1V405h-1V398h-1V411h-1V406h-1V394h-1V402h-1V403h-1V405h-1V415h-1V398h-1V395h-1V389h-1V388h-1V397h-1V396h-1V390h-1V401h-1V404h-1V394h-1V395h-1V402h-1V403h-1V404h-1V407h-1V407h-1V410h-1V397h-1V411h-1V393h-1V409h-1V412h-1V410h-1V409h-1V397h-1V398h-1V408h-1V391h-1V392h-1V399h-1V399h-1V414h-1V414h-1V405h-1V406h-1V407h-1V407h-1V404h-1V406h-1V410h-1V394h-1V395h-1V396h-1V402h-1V390h-1V406h-1V417h-1V417h-1V407h-1V408h-1V406h-1V407h-1V405h-1V405h-1V398h-1V405h-1V409h-1V403h-1V406h-1V406h-1V407h-1V398h-1V391h-1V411h-1V390h-1V390h-1V413h-1V394h-1V398h-1V393h-1V392h-1V400h-1V392h-1V403h-1V402h-1V402h-1V399h-1V394h-1V394h-1V403h-1V403h-1V401h-1V395h-1V407h-1V408h-1V393h-1V395h-1V398h-1V417h-1V406h-1V405h-1V398h-1V402h-1V406h-1V412h-1V412h-1V399h-1V399h-1V408h-1V399h-1V399h-1V394h-1V398h-1V393h-1V401h-1V416h-1V416h-1V392h-1V400h-1V400h-1V405h-1V405h-1V404h-1V394h-1V399h-1V402h-1V402h-1V403h-1V391h-1V404h-1V394h-1V393h-1V395h-1V395h-1V394h-1V404h-1V412h-1V400h-1V400h-1V401h-1V415h-1V409h-1V410h-1V410h-1V403h-1V417h-1V403h-1V412h-1V405h-1V402h-1V407h-1V407h-1V400h-1V397h-1V408h-1V395h-1V412h-1V414h-1V405h-1V405h-1V409h-1V392h-1V392h-1V399h-1V401h-1V396h-1V395h-1V406h-1V407h-1V408h-1V395h-1V395h-1V396h-1V394h-1V407h-1V407h-1V403h-1V395h-1V397h-1V396h-1V399h-1V400h-1V408h-1V409h-1V395h-1V411h-1V394h-1V398h-1V389h-1V389h-1V391h-1V393h-1V398h-1V393h-1V401h-1V401h-1V407h-1V407h-1V403h-1V409h-1V406h-1V405h-1V405h-1V411h-1V405h-1V405h-1V407h-1V407h-1V408h-1V408h-1V418h-1V405h-1V405h-1V407h-1V399h-1V409h-1V409h-1V410h-1V404h-1V404h-1V409h-1V398h-1V400h-1V404h-1V403h-1V391h-1V411h-1V392h-1V396h-1V399h-1V399h-1V399h-1V402h-1V393h-1V393h-1V404h-1V405h-1V395h-1V405h-1V393h-1V393h-1V413h-1V404h-1V404h-1V400h-1V400h-1V407h-1V411h-1V412h-1V407h-1V407h-1V400h-1V400h-1V402h-1V393h-1V412h-1V404h-1V400h-1V401h-1V392h-1V404h-1V420h-1V420h-1V413h-1V413h-1V421h-1V399h-1V399h-1V415h-1V406h-1V405h-1V417h-1V395h-1V400h-1V398h-1V413h-1V396h-1V395h-1V390h-1V406h-1V392h-1V405h-1V390h-1V389h-1V389h-1V407h-1V416h-1V402h-1V402h-1V404h-1V406h-1V398h-1V397h-1V402h-1V394h-1V415h-1V392h-1V394h-1V411h-1V401h-1V396h-1V396h-1V397h-1V392h-1V393h-1V408h-1V398h-1V395h-1V411h-1V398h-1V397h-1V395h-1V407h-1V402h-1V402h-1V396h-1V398h-1V403h-1V402h-1V407h-1V392h-1V410h-1V393h-1V393h-1V397h-1V404h-1V395h-1V400h-1V395h-1V402h-1V399h-1V402h-1V398h-1V401h-1V401h-1V399h-1V399h-1V404h-1V399h-1V399h-1V401h-1V401h-1V395h-1V392h-1V411h-1V411h-1V399h-1V401h-1V398h-1V398h-1V395h-1V396h-1V404h-1V397h-1V404h-1V396h-1V403h-1V396h-1V400h-1V399h-1V395h-1V413h-1V413h-1V412h-1V418h-1V405h-1V405h-1V408h-1V410h-1V400h-1V400h-1V399h-1V410h-1V391h-1V391h-1V395h-1V396h-1V389h-1V394h-1V394h-1V408h-1V408h-1V401h-1V395h-1V395h-1V406h-1V402h-1V402h-1V391h-1V392h-1V410h-1V410h-1V397h-1V397h-1V406h-1V402h-1V402h-1V400h-1V406h-1V416h-1V415h-1V391h-1V403h-1V408h-1V407h-1V409h-1V397h-1V396h-1V416h-1V415h-1V405h-1V414h-1V392h-1V409h-1V393h-1V394h-1V394h-1V395h-1V396h-1V388h-1V404h-1V389h-1V392h-1V404h-1V392h-1V389h-1V390h-1V392h-1V396h-1V396h-1V398h-1V396h-1V391h-1V391h-1V385h-1V385h-1V396h-1V392h-1V391h-1V390h-1V392h-1V387h-1V397h-1V397h-1V396h-1V397h-1V399h-1V390h-1V397h-1V393h-1V387h-1V388h-1V399h-1V399h-1V389h-1V388h-1V400h-1V409h-1V400h-1V391h-1V391h-1V397h-1Z"/><path fill="#6464dc" d="M0,325V325h1V325h1V325h1V323h1V322h1V323h1V325h1V325h1V326h1V325h1V324h1V324h1V323h1V325h1V324h1V323h1V324h1V323h1V324h1V324h1V324h1V324h1V324h1V325h1V324h1V323h1V326h1V326h1V327h1V326h1V325h1V326h1V325h1V325h1V324h1V326h1V325h1V324h1V324h1V325h1V325h1V325h1V325h1V323h1V325h1V325h1V324h1V324h1V321h1V321h1V321h1V321h1V321h1V321h1V323h1V321h1V323h1V321h1V324h1V323h1V324h1V323h1V322h1V322h1V322h1V322h1V321h1V321h1V322h1V321h1V320h1V319h1V321h1V320h1V322h1V322h1V323h1V321h1V322h1V320h1V321h1V321h1V322h1V320h1V322h1V321h1V320h1V321h1V320h1V321h1V321h1V322h1V321h1V321h1V322h1V322h1V321h1V321h1V322h1V322h1V322h1V322h1V322h1V321h1V322h1V320h1V320h1V320h1V319h1V321h1V320h1V321h1V322h1V323h1V321h1V322h1V321h1V322h1V323h1V322h1V322h1V323h1V322h1V322h1V323h1V322h1V323h1V323h1V321h1V321h1V321h1V321h1V322h1V321h1V321h1V322h1V320h1V322h1V320h1V322h1V322h1V323h1V320h1V322h1V320h1V321h1V320h1V323h1V322h1V321h1V322h1V322h1V322h1V322h1V321h1V320h1V321h1V321h1V322h1V321h1V322h1V322h1V322h1V322h1V323h1V321h1V321h1V320h1V321h1V320h1V322h1V322h1V322h1V322h1V322h1V323h1V322h1V322h1V321h1V323h1V323h1V323h1V322h1V322h1V323h1V323h1V322h1V321h1V320h1V321h1V320h1V322h1V322h1V321h1V323h1V321h1V323h1V322h1V323h1V322h1V321h1V321h1V322h1V321h1V322h1V323h1V322h1V323h1V322h1V323h1V322h1V322h1V321h1V320h1V322h1V321h1V323h1V322h1V322h1V320h1V321h1V321h1V322h1V322h1V321h1V322h1V322h1V322h1V321h1V320h1V321h1V321h1V323h1V323h1V322h1V321h1V322h1V323h1V321h1V322h1V323h1V323h1V323h1V322h1V322h1V321h1V322h1V322h1V324h1V321h1V322h1V320h1V321h1V321h1V320h1V320h1V321h1V320h1V321h1V321h1V321h1V322h1V322h1V323h1V321h1V320h1V321h1V322h1V320h1V320h1V321h1V320h1V321h1V322h1V322h1V322h1V322h1V322h1V321h1V323h1V321h1V322h1V321h1V321h1V320h1V321h1V322h1V323h1V324h1V323h1V322h1V321h1V322h1V321h1V321h1V320h1V320h1V322h1V322h1V322h1V324h1V324h1V322h1V321h1V322h1V320h1V322h1V322h1V321h1V320h1V320h1V320h1V320h1V322h1V322h1V320h1V322h1V322h1V321h1V323h1V322h1V323h1V321h1V323h1V323h1V321h1V322h1V321h1V321h1V323h1V322h1V323h1V324h1V323h1V321h1V320h1V320h1V320h1V322h1V320h1V322h1V322h1V320h1V321h1V320h1V321h1V322h1V321h1V323h1V322h1V322h1V321h1V320h1V322h1V322h1V320h1V320h1V322h1V322h1V322h1V323h1V322h1V322h1V321h1V320h1V321h1V322h1V323h1V322h1V324h1V322h1V323h1V322h1V322h1V323h1V322h1V321h1V321h1V321h1V321h1V323h1V323h1V321h1V322h1V323h1V323h1V321h1V322h1V320h1V321h1V321h1V323h1V322h1V322h1V323h1V323h1V323h1V323h1V323h1V322h1V321h1V321h1V322h1V321h1V320h1V321h1V320h1V321h1V320h1V321h1V320h1V321h1V322h1V320h1V320h1V322h1V322h1V320h1V322h1V321h1V320h1V320h1V321h1V321h1V320h1V322h1V323h1V323h1V323h1V323h1V322h1V322h1V320h1V320h1V322h1V321h1V322h1V321h1V322h1V321h1V321h1V323h1V321h1V323h1V322h1V322h1V322h1V321h1V322h1V320h1V321h1V321h1V319h1V321h1V322h1V321h1V324h1V322h1V323h1V323h1V322h1V321h1V321h1V322h1V321h1V323h1V322h1V322h1V321h1V322h1V321h1V322h1V323h1V321h1V321h1V322h1V321h1V320h1V321h1V321h1V320h1V321h1V321h1V321h1V320h1V322h1V320h1V322h1V322h1V322h1V321h1V321h1V320h1V320h1V320h1V322h1V320h1V320h1V321h1V321h1V320h1V320h1V322h1V321h1V320h1V321h1V320h1V321h1V323h1V322h1V322h1V323h1V324h1V323h1V322h1V322h1V323h1V322h1V321h1V320h1V321h1V320h1V321h1V321h1V319h1V321h1V322h1V323h1V323h1V323h1V322h1V323h1V322h1V321h1V321h1V322h1V323h1V321h1V322h1V321h1V321h1V322h1V322h1V320h1V320h1V322h1V322h1V322h1V323h1V321h1V322h1V321h1V321h1V321h1V321h1V322h1V320h1V322h1V322h1V320h1V321h1V321h1V322h1V321h1V323h1V321h1V322h1V323h1V322h1V323h1V321h1V322h1V320h1V322h1V321h1V321h1V322h1V323h1V321h1V321h1V321h1V322h1V320h1V321h1V321h1V320h1V322h1V321h1V322h1V322h1V321h1V322h1V321h1V322h1V321h1V322h1V320h1V322h1V322h1V323h1V323h1V322h1V323h1V320h1V320h1V320h1V322h1V322h1V323h1V323h1V324h1V323h1V324h1V322h1V321h1V322h1V322h1V322h1V321h1V320h1V320h1V321h1V321h1V322h1V323h1V323h1V322h1V322h1V322h1V321h1V321h1V321h1V321h1V321h1V322h1V322h1V323h1V322h1V321h1V322h1V320h1V321h1V320h1V320h1V322h1V322h1V322h1V322h1V321h1V323h1V322h1V321h1V322h1V322h1V321h1V322h1V320h1V321h1V320h1V321h1V321h1V321h1V321h1V320h1V321h1V320h1V320h1V321h1V320h1V322h1V322h1V323h1V322h1V321h1V322h1V322h1V320h1V320h1V322h1V321h1V321h1V322h1V321h1V321h1V322h1V322h1V322h1V322h1V322h1V323h1V320h1V321h1V320h1V322h1V321h1V322h1V320h1V321h1V321h1V322h1V321h1V322h1V321h1V321h1V322h1V322h1V321h1V322h1V322h1V322h1V321h1V322h1V320h1V321h1V321h1V322h1V320h1V321h1V322h1V322h1V321h1V322h1V321h1V321h1V323h1V323h1V321h1V323h1V323h1V322h1V322h1V323h1V322h1V322h1V321h1V321h1V323h1V322h1V321h1V321h1V320h1V321h1V321h1V322h1V322h1V322h1V322h1V323h1V324h1V323h1V322h1V323h1V323h1V324h1V323h1V322h1V323h1V323h1V322h1V323h1V322h1V322h1V321h1V322h1V321h1V321h1V321h1V321h1V320h1V321h1V320h1V321h1V321h1V322h1V323h1V322h1V323h1V322h1V324h1V322h1V323h1V323h1V322h1V323h1V323h1V323h1V324h1V322h1V324h1V323h1V321h1V322h1V323h1V322h1V321h1V320h1V322h1V321h1V322h1V320h1V321h1V321h1V321h1V323h1V321h1V321h1V321h1V321h1V323h1V321h1V320h1V321h1V320h1V322h1V322h1V321h1V321h1V323h1V322h1V321h1V322h1V320h1V320h1V322h1V321h1V321h1V320h1V322h1V322h1V323h1V321h1V321h1V321h1V322h1V323h1V323h1V323h1V323h1V320h1V322h1V320h1V321h1V322h1V323h1V323h1V323h1V322h1V323h1V322h1V320h1V322h1V322h1V320h1V322h1V321h1V322h1V321h1V321h1V321h1V321h1V320h1V320h1V321h1V320h1V320h1V322h1V321h1V320h1V321h1V320h1V322h1V321h1V323h1V322h1V323h1V321h1V322h1V321h1V321h1V321h1V320h1V320h1V322h1V322h1V322h1V322h1V322h1V322h1V323h1V322h1V321h1V321h1V322h1V321h1V321h1V322h1V323h1V323h1V323h1V322h1V320h1V322h1V322h1V322h1V322h1V322h1V322h1V321h1V321h1V322h1V323h1V322h1V323h1V323h1V322h1V322h1V321h1V321h1V320h1V320h1V319h1V321h1V320h1V319h1V321h1V320h1V321h1V321h1V320h1V320h1V321h1V320h1V321h1V322h1V321h1V320h1V322h1V322h1V323h1V322h1V323h1V323h1V322h1V321h1V322h1V321h1V323h1V322h1V323h1V322h1V323h1V323h1V323h1V323h1V322h1V320h1V322h1V321h1V322h1V322h1V321h1V321h1V323h1V321h1V320h1V322h1V322h1V321h1V323h1V321h1V322h1V323h1V323h1V322h1V323h1V321h1V321h1V321h1V320h1V321h1V321h1V321h1V322h1V322h1V322h1V323h1V321h1V321h1V321h1V322h1V321h1V321h1V322h1V322h1V320h1V321h1V321h1V322h1V322h1V322h1V323h1V322h1V322h1V321h1V322h1V321h1V322h1V322h1V323h1V323h1V322h1V323h1V323h1V322h1V323h1V321h1V322h1V322h1V321h1V321h1V321h1V322h1V322h1V323h1V322h1V322h1V322h1V323h1V323h1V322h1V323h1V322h1V321h1V321h1V320h1V320h1V320h1V320h1V320h1V321h1V320h1V321h1V322h1V322h1V322h1V322h1V322h1V322h1V321h1V321h1V323h1V322h1V322h1V323h1V322h1V321h1V321h1V322h1V322h1V322h1V321h1V322h1V322h1V323h1V323h1V323h1V321h1V321h1V321h1V321h1V322h1V320h1V320h1V322h1V321h1V322h1V323h1V323h1V321h1V321h1V322h1V322h1V322h1V321h1V321h1V321h1V321h1V320h1V321h1V321h1V321h1V321h1V322h1V323h1V321h1V321h1V322h1V320h1V320h1V321h1V320h1V322h1V321h1V322h1V322h1V322h1V322h1V320h1V320h1V320h1V320h1V320h1V322h1V321h1V322h1V322h1V321h1V322h1V321h1V322h1V322h1V322h1V322h1V322h1V322h1V321h1V321h1V320h1V320h1V322h1V320h1V321h1V322h1V320h1V322h1V322h1V321h1V321h1V322h1V321h1V322h1V320h1V322h1V322h1V322h1V322h1V322h1V322h1V321h1V322h1V320h1V321h1V320h1V320h1V321h1V320h1V322h1V322h1V322h1V323h1V323h1V324h1V323h1V322h1V322h1V321h1V322h1V322h1V321h1V321h1V322h1V322h1V321h1V320h1V322h1V321h1V320h1V321h1V322h1V321h1V322h1V322h1V322h1V321h1V320h1V321h1V322h1V323h1V322h1V322h1V323h1V322h1V323h1V322h1V322h1V320h1V321h1V321h1V323h1V322h1V323h1V322h1V322h1V322h1V321h1V320h1V320h1V322h1V321h1V321h1V321h1V321h1V321h1V321h1V322h1V321h1V320h1V322h1V321h1V322h1V322h1V322h1V322h1V322h1V321h1V321h1V321h1V320h1V320h1V320h1V322h1V322h1V323h1V323h1V322h1V322h1V321h1V322h1V322h1V322h1V322h1V322h1V322h1V322h1V321h1V321h1V323h1V323h1V322h1V323h1V323h1V322h1V321h1V321h1V321h1V322h1V321h1V323h1V321h1V321h1V321h1V323h1V322h1V323h1V323h1V322h1V321h1V322h1V321h1V321h1V322h1V322h1V320h1V322h1V322h1V322h1V323h1V322h1V322h1V322h1V320h1V321h1V321h1V322h1V321h1V321h1V322h1V322h1V321h1V321h1V320h1V321h1V320h1V322h1V322h1V322h1V320h1V321h1V322h1V322h1V320h1V322h1V320h1V321h1V322h1V323h1V323h1V322h1V321h1V322h1V321h1V322h1V322h1V322h1V322h1V321h1V322h1V323h1V322h1V322h1V322h1V323h1V323h1V322h1V324h1V322h1V322h1V322h1V323h1V323h1V322h1V322h1V321h1V322h1V321h1V323h1V322h1V322h1V321h1V322h1V321h1V321h1V322h1V323h1V322h1V322h1V323h1V322h1V322h1V322h1V321h1V321h1V322h1V320h1V322h1V322h1V322h1V321h1V320h1V320h1V321h1V321h1V322h1V323h1V326h1V326h1V327h1V329h1V332h1V332h1V331h1V329h1V322h1V322h1V323h1V321h1V322h1V321h1V320h1V322h1V321h1V321h1V322h1V322h1V321h1V322h1V321h1V321h1V322h1V321h1V321h1V322h1V322h1V321h1V321h1V320h1V321h1V322h1V321h1V322h1V323h1V321h1V321h1V323h1V323h1V321h1V322h1V320h1V320h1V321h1V321h1V322h1V319h1V321h1V322h1V320h1V321h1V321h1V321h1V322h1V322h1V322h1V321h1V321h1V321h1V320h1V322h1V321h1V322h1V322h1V321h1V322h1V322h1V323h1V323h1V322h1V323h1V322h1V322h1V323h1V321h1V321h1V323h1V321h1V322h1V322h1V321h1V322h1V323h1V322h1V322h1V321h1V321h1V321h1V321h1V323h1V322h1V322h1V322h1V321h1V324h1V323h1V322h1V322h1V321h1V322h1V322h1V320h1V320h1V320h1V322h1V320h1V322h1V321h1V322h1V322h1V323h1V322h1V358h-1V360h-1V361h-1V359h-1V360h-1V361h-1V358h-1V358h-1V357h-1V358h-1V359h-1V358h-1V359h-1V361h-1V359h-1V358h-1V359h-1V357h-1V358h-1V359h-1V358h-1V357h-1V358h-1V358h-1V358h-1V358h-1V358h-1V357h-1V359h-1V358h-1V359h-1V357h-1V357h-1V359h-1V357h-1V357h-1V359h-1V359h-1V358h-1V358h-1V357h-1V358h-1V357h-1V359h-1V358h-1V358h-1V360h-1V358h-1V358h-1V360h-1V360h-1V360h-1V357h-1V358h-1V358h-1V358h-1V358h-1V360h-1V359h-1V359h-1V359h-1V357h-1V358h-1V360h-1V360h-1V360h-1V359h-1V359h-1V358h-1V357h-1V359h-1V358h-1V358h-1V360h-1V359h-1V360h-1V359h-1V361h-1V360h-1V359h-1V360h-1V360h-1V359h-1V358h-1V357h-1V357h-1V359h-1V358h-1V358h-1V360h-1V360h-1V361h-1V359h-1V358h-1V359h-1V359h-1V359h-1V359h-1V359h-1V359h-1V360h-1V358h-1V358h-1V359h-1V358h-1V357h-1V349h-1V351h-1V350h-1V350h-1V350h-1V351h-1V354h-1V355h-1V356h-1V356h-1V359h-1V359h-1V358h-1V359h-1V358h-1V358h-1V358h-1V359h-1V360h-1V359h-1V359h-1V360h-1V358h-1V359h-1V357h-1V357h-1V358h-1V358h-1V358h-1V357h-1V359h-1V359h-1V359h-1V357h-1V357h-1V356h-1V358h-1V359h-1V358h-1V361h-1V359h-1V359h-1V360h-1V360h-1V360h-1V359h-1V360h-1V358h-1V359h-1V359h-1V360h-1V358h-1V359h-1V359h-1V359h-1V358h-1V358h-1V359h-1V359h-1V358h-1V359h-1V358h-1V358h-1V359h-1V358h-1V358h-1V358h-1V358h-1V359h-1V357h-1V357h-1V357h-1V357h-1V357h-1V357h-1V358h-1V357h-1V359h-1V357h-1V359h-1V358h-1V359h-1V357h-1V357h-1V359h-1V358h-1V359h-1V358h-1V358h-1V358h-1V358h-1V360h-1V359h-1V359h-1V358h-1V358h-1V358h-1V359h-1V358h-1V358h-1V359h-1V357h-1V359h-1V357h-1V358h-1V358h-1V359h-1V359h-1V359h-1V359h-1V358h-1V358h-1V358h-1V359h-1V358h-1V359h-1V360h-1V358h-1V360h-1V358h-1V360h-1V358h-1V358h-1V359h-1V360h-1V359h-1V358h-1V360h-1V359h-1V360h-1V360h-1V359h-1V359h-1V360h-1V360h-1V360h-1V359h-1V361h-1V360h-1V360h-1V359h-1V359h-1V358h-1V359h-1V358h-1V358h-1V358h-1V359h-1V358h-1V360h-1V358h-1V359h-1V358h-1V358h-1V357h-1V358h-1V358h-1V358h-1V359h-1V359h-1V358h-1V358h-1V357h-1V359h-1V358h-1V359h-1V358h-1V358h-1V357h-1V359h-1V359h-1V357h-1V358h-1V357h-1V356h-1V357h-1V359h-1V358h-1V359h-1V358h-1V359h-1V357h-1V358h-1V357h-1V358h-1V359h-1V358h-1V359h-1V358h-1V357h-1V357h-1V359h-1V358h-1V357h-1V357h-1V360h-1V360h-1V359h-1V359h-1V358h-1V358h-1V358h-1V360h-1V359h-1V359h-1V358h-1V360h-1V359h-1V359h-1V359h-1V359h-1V357h-1V358h-1V357h-1V359h-1V360h-1V360h-1V359h-1V358h-1V358h-1V358h-1V357h-1V358h-1V359h-1V359h-1V358h-1V359h-1V359h-1V358h-1V358h-1V358h-1V360h-1V359h-1V359h-1V360h-1V359h-1V358h-1V358h-1V359h-1V358h-1V358h-1V358h-1V358h-1V357h-1V357h-1V357h-1V358h-1V357h-1V359h-1V358h-1V358h-1V360h-1V359h-1V358h-1V358h-1V358h-1V358h-1V358h-1V359h-1V359h-1V360h-1V360h-1V358h-1V357h-1V359h-1V359h-1V358h-1V359h-1V359h-1V358h-1V359h-1V359h-1V359h-1V360h-1V359h-1V360h-1V359h-1V360h-1V359h-1V358h-1V360h-1V361h-1V359h-1V359h-1V359h-1V360h-1V358h-1V359h-1V358h-1V358h-1V358h-1V359h-1V360h-1V359h-1V359h-1V360h-1V358h-1V358h-1V360h-1V359h-1V358h-1V359h-1V358h-1V359h-1V360h-1V359h-1V359h-1V358h-1V358h-1V358h-1V358h-1V359h-1V358h-1V357h-1V357h-1V359h-1V357h-1V359h-1V358h-1V359h-1V358h-1V360h-1V360h-1V360h-1V359h-1V359h-1V360h-1V359h-1V360h-1V359h-1V358h-1V359h-1V357h-1V360h-1V360h-1V360h-1V359h-1V358h-1V359h-1V356h-1V358h-1V359h-1V359h-1V359h-1V359h-1V360h-1V358h-1V359h-1V359h-1V360h-1V359h-1V357h-1V359h-1V358h-1V358h-1V357h-1V359h-1V359h-1V358h-1V357h-1V357h-1V359h-1V358h-1V358h-1V360h-1V359h-1V358h-1V359h-1V360h-1V361h-1V359h-1V359h-1V360h-1V361h-1V359h-1V360h-1V359h-1V358h-1V359h-1V358h-1V359h-1V359h-1V359h-1V358h-1V360h-1V360h-1V360h-1V359h-1V358h-1V360h-1V360h-1V359h-1V358h-1V359h-1V360h-1V360h-1V359h-1V358h-1V360h-1V358h-1V358h-1V359h-1V359h-1V360h-1V359h-1V359h-1V359h-1V358h-1V358h-1V357h-1V358h-1V359h-1V359h-1V360h-1V359h-1V359h-1V358h-1V359h-1V360h-1V359h-1V360h-1V359h-1V358h-1V361h-1V359h-1V361h-1V359h-1V359h-1V359h-1V360h-1V359h-1V359h-1V358h-1V360h-1V359h-1V360h-1V358h-1V359h-1V359h-1V358h-1V360h-1V359h-1V359h-1V358h-1V359h-1V358h-1V357h-1V358h-1V357h-1V358h-1V358h-1V358h-1V358h-1V360h-1V359h-1V358h-1V358h-1V359h-1V360h-1V359h-1V360h-1V359h-1V359h-1V358h-1V359h-1V359h-1V358h-1V359h-1V359h-1V359h-1V359h-1V361h-1V359h-1V359h-1V360h-1V359h-1V360h-1V359h-1V360h-1V360h-1V360h-1V360h-1V359h-1V359h-1V359h-1V358h-1V358h-1V358h-1V357h-1V359h-1V356h-1V356h-1V358h-1V359h-1V357h-1V358h-1V358h-1V360h-1V358h-1V360h-1V360h-1V360h-1V361h-1V361h-1V359h-1V360h-1V359h-1V359h-1V359h-1V360h-1V360h-1V359h-1V360h-1V359h-1V359h-1V357h-1V358h-1V359h-1V358h-1V360h-1V359h-1V359h-1V359h-1V359h-1V359h-1V359h-1V359h-1V359h-1V360h-1V360h-1V360h-1V359h-1V360h-1V359h-1V358h-1V359h-1V360h-1V358h-1V359h-1V357h-1V358h-1V360h-1V359h-1V360h-1V360h-1V358h-1V357h-1V359h-1V359h-1V359h-1V359h-1V360h-1V359h-1V360h-1V360h-1V360h-1V360h-1V358h-1V357h-1V357h-1V357h-1V357h-1V356h-1V358h-1V358h-1V358h-1V360h-1V360h-1V358h-1V360h-1V360h-1V360h-1V359h-1V360h-1V360h-1V359h-1V357h-1V359h-1V358h-1V357h-1V357h-1V357h-1V359h-1V358h-1V359h-1V358h-1V359h-1V359h-1V359h-1V358h-1V360h-1V358h-1V358h-1V359h-1V359h-1V360h-1V360h-1V360h-1V360h-1V360h-1V359h-1V360h-1V361h-1V359h-1V360h-1V360h-1V361h-1V361h-1V360h-1V358h-1V359h-1V360h-1V359h-1V360h-1V360h-1V358h-1V359h-1V359h-1V358h-1V358h-1V359h-1V359h-1V357h-1V359h-1V359h-1V359h-1V358h-1V358h-1V358h-1V357h-1V358h-1V359h-1V357h-1V359h-1V357h-1V357h-1V358h-1V358h-1V358h-1V357h-1V358h-1V357h-1V357h-1V359h-1V359h-1V359h-1V358h-1V358h-1V359h-1V359h-1V360h-1V358h-1V358h-1V359h-1V358h-1V359h-1V359h-1V360h-1V358h-1V360h-1V359h-1V358h-1V357h-1V358h-1V357h-1V358h-1V359h-1V359h-1V358h-1V358h-1V359h-1V357h-1V358h-1V359h-1V357h-1V357h-1V358h-1V359h-1V359h-1V361h-1V359h-1V360h-1V360h-1V359h-1V360h-1V360h-1V359h-1V359h-1V359h-1V360h-1V360h-1V359h-1V359h-1V359h-1V359h-1V359h-1V360h-1V358h-1V359h-1V358h-1V360h-1V359h-1V358h-1V359h-1V357h-1V358h-1V361h-1V359h-1V359h-1V360h-1V357h-1V358h-1V358h-1V356h-1V356h-1V358h-1V357h-1V358h-1V357h-1V358h-1V359h-1V359h-1V359h-1V359h-1V360h-1V359h-1V359h-1V358h-1V358h-1V358h-1V358h-1V359h-1V358h-1V358h-1V357h-1V358h-1V359h-1V358h-1V357h-1V357h-1V359h-1V359h-1V358h-1V359h-1V358h-1V357h-1V358h-1V360h-1V359h-1V359h-1V357h-1V359h-1V357h-1V359h-1V359h-1V359h-1V360h-1V360h-1V360h-1V359h-1V360h-1V360h-1V358h-1V358h-1V358h-1V358h-1V359h-1V360h-1V359h-1V360h-1V360h-1V359h-1V358h-1V358h-1V358h-1V360h-1V359h-1V360h-1V358h-1V359h-1V359h-1V359h-1V358h-1V360h-1V360h-1V359h-1V359h-1V357h-1V359h-1V360h-1V358h-1V359h-1V359h-1V359h-1V359h-1V360h-1V358h-1V359h-1V358h-1V359h-1V359h-1V358h-1V358h-1V360h-1V360h-1V360h-1V359h-1V358h-1V359h-1V359h-1V359h-1V359h-1V359h-1V359h-1V359h-1V358h-1V359h-1V358h-1V357h-1V357h-1V358h-1V358h-1V359h-1V359h-1V359h-1V357h-1V357h-1V357h-1V358h-1V357h-1V359h-1V360h-1V358h-1V358h-1V360h-1V359h-1V360h-1V359h-1V360h-1V360h-1V360h-1V360h-1V358h-1V357h-1V358h-1V357h-1V359h-1V358h-1V357h-1V359h-1V357h-1V359h-1V359h-1V359h-1V358h-1V359h-1V359h-1V358h-1V357h-1V358h-1V357h-1V357h-1V358h-1V359h-1V358h-1V358h-1V359h-1V358h-1V357h-1V359h-1V359h-1V360h-1V360h-1V359h-1V359h-1V360h-1V360h-1V360h-1V359h-1V358h-1V358h-1V358h-1V358h-1V358h-1V359h-1V358h-1V360h-1V358h-1V358h-1V358h-1V358h-1V360h-1V358h-1V358h-1V359h-1V359h-1V360h-1V359h-1V359h-1V358h-1V358h-1V359h-1V360h-1V360h-1V359h-1V357h-1V357h-1V357h-1V358h-1V358h-1V359h-1V360h-1V360h-1V359h-1V359h-1V359h-1V358h-1V360h-1V359h-1V359h-1V359h-1V359h-1V357h-1V359h-1V358h-1V358h-1V357h-1V359h-1V358h-1V360h-1V361h-1V361h-1V359h-1V358h-1V360h-1V359h-1V360h-1V360h-1V359h-1V360h-1V358h-1V358h-1V359h-1V358h-1V360h-1V358h-1V359h-1V359h-1V360h-1V359h-1V359h-1V360h-1V359h-1V359h-1V358h-1V358h-1V357h-1V359h-1V360h-1V359h-1V359h-1V358h-1V360h-1V360h-1V360h-1V358h-1V358h-1V359h-1V360h-1V358h-1V359h-1V359h-1V358h-1V359h-1V359h-1V360h-1V360h-1V358h-1V358h-1V358h-1V359h-1V359h-1V358h-1V359h-1V359h-1V358h-1V357h-1V359h-1V357h-1V357h-1V359h-1V358h-1V358h-1V357h-1V357h-1V359h-1V357h-1V357h-1V357h-1V357h-1V358h-1V358h-1V358h-1V359h-1V360h-1V359h-1V358h-1V357h-1V358h-1V358h-1V358h-1V359h-1V359h-1V360h-1V359h-1V359h-1V360h-1V359h-1V360h-1V360h-1V360h-1V358h-1V358h-1V358h-1V358h-1V358h-1V359h-1V358h-1V360h-1V359h-1V360h-1V359h-1V360h-1V360h-1V359h-1V358h-1V359h-1V360h-1V359h-1V359h-1V360h-1V360h-1V359h-1V359h-1V360h-1V359h-1V359h-1V358h-1V359h-1V358h-1V359h-1V357h-1V358h-1V358h-1V357h-1V358h-1V357h-1V357h-1V357h-1V358h-1V358h-1V357h-1V359h-1V361h-1V359h-1V358h-1V359h-1V359h-1V359h-1V358h-1V358h-1V359h-1V359h-1V357h-1V358h-1V357h-1V358h-1V358h-1V359h-1V361h-1V360h-1V359h-1V361h-1V361h-1V360h-1V358h-1V358h-1V357h-1V359h-1V357h-1V359h-1V357h-1V357h-1V358h-1V358h-1V358h-1V360h-1V359h-1V360h-1V360h-1V360h-1V360h-1V360h-1V359h-1V359h-1V357h-1V359h-1V357h-1V359h-1V358h-1V358h-1V358h-1V360h-1V358h-1V360h-1V358h-1V358h-1V358h-1V359h-1V359h-1V357h-1V358h-1V360h-1V359h-1V360h-1V360h-1V359h-1V358h-1V358h-1V358h-1V358h-1V357h-1V358h-1V358h-1V358h-1V359h-1V358h-1V358h-1V359h-1V357h-1V359h-1V357h-1V357h-1V359h-1V358h-1V359h-1V357h-1V358h-1V357h-1V359h-1V357h-1V359h-1V359h-1V358h-1V358h-1V357h-1V358h-1V356h-1V358h-1V358h-1V358h-1V357h-1V357h-1V357h-1V358h-1V359h-1V358h-1V359h-1V357h-1V360h-1V360h-1V359h-1V359h-1V360h-1V360h-1V358h-1V359h-1V359h-1V359h-1V359h-1V361h-1V359h-1V358h-1V359h-1V359h-1V358h-1V359h-1V358h-1V359h-1V358h-1V359h-1V357h-1V358h-1V359h-1V358h-1V359h-1V359h-1V358h-1V359h-1V358h-1V357h-1V359h-1V359h-1V357h-1V359h-1V358h-1V357h-1V359h-1V358h-1V358h-1V360h-1V359h-1V360h-1V360h-1V359h-1V360h-1V360h-1V360h-1V358h-1V358h-1V359h-1V360h-1V359h-1V360h-1V359h-1V360h-1V358h-1V358h-1V357h-1V358h-1V358h-1V359h-1V358h-1V359h-1V359h-1V358h-1V357h-1V358h-1V359h-1V359h-1V358h-1V358h-1V359h-1V360h-1V360h-1V361h-1V359h-1V361h-1V359h-1V360h-1V358h-1V359h-1V358h-1V358h-1V359h-1V358h-1V359h-1V359h-1V358h-1V359h-1V358h-1V357h-1V358h-1V358h-1V357h-1V358h-1V357h-1V356h-1V357h-1V359h-1V359h-1V358h-1V359h-1V359h-1V358h-1V357h-1V358h-1V359h-1V359h-1V359h-1V359h-1V358h-1V360h-1V358h-1V358h-1V358h-1V361h-1V360h-1V359h-1V360h-1V359h-1V358h-1V358h-1V360h-1V360h-1V358h-1V359h-1V359h-1V357h-1V358h-1V358h-1V359h-1V359h-1V360h-1V358h-1V358h-1V360h-1V359h-1V358h-1V359h-1V359h-1V357h-1V358h-1V357h-1V358h-1V358h-1V358h-1V358h-1V359h-1V360h-1V359h-1V359h-1V360h-1V359h-1V356h-1V355h-1V355h-1V356h-1V355h-1V355h-1V355h-1V357h-1V356h-1V357h-1V355h-1V357h-1V357h-1V355h-1V357h-1V356h-1V356h-1V356h-1V357h-1V357h-1V358h-1V356h-1V357h-1V356h-1V357h-1V356h-1V357h-1V355h-1V355h-1V355h-1V355h-1V354h-1V354h-1V354h-1V355h-1V355h-1V355h-1V355h-1V357h-1V357h-1V356h-1V357h-1V356h-1V356h-1V356h-1V356h-1V356h-1V356h-1Z"/><rect x="0" y="237" width="1478" height="1" fill="#111"/><rect x="0" y="443" width="1478" height="2" fill="#000"/></svg>
<div class="abs" style="left:216px;top:199px;width:1109px;height:598px;border:1px solid #4a4a4a;background:#f0f0f0;box-shadow:0 4px 14px rgba(0,0,20,0.4), inset 1px 1px 0 #fff, inset -1px -1px 0 #fff"></div>
<div class="abs" style="left:217px;top:200px;width:1109px;height:38px;background:#fff"></div>
<div class="t" style="left:227px;top:212px;font-size:14.5px;letter-spacing:-0.12px">Filter Curve EQ</div>
<div class="abs" style="left:1173px;top:218px;width:12px;height:1px;background:#111"></div>
<div class="abs" style="left:1231px;top:213px;width:10px;height:10px;border:1px solid #111"></div>
<svg class="abs" style="left:1289px;top:212px" width="14" height="14"><path d="M1,1 L13,13 M13,1 L1,13" stroke="#111" stroke-width="1.1"/></svg>
<div class="abs" style="left:224px;top:245px;width:138px;height:23px;border:2px solid #0078d7;background:#e1e1e1;font-size:14.5px;line-height:23px;text-align:center;white-space:nowrap;color:#000"><span style="position:relative;top:1px">Presets &amp; settings</span></div>
<div class="abs" style="left:1108px;top:246px;width:107px;height:24px;border:1px solid #adadad;background:#e1e1e1;font-size:14.5px;line-height:24px;text-align:center;white-space:nowrap;color:#000">Preview</div>
<div class="abs" style="left:1227px;top:246px;width:90px;height:24px;border:1px solid #adadad;background:#e1e1e1;font-size:14.5px;line-height:24px;text-align:center;white-space:nowrap;color:#000">Apply</div>
<svg class="abs" style="left:0;top:0" width="1478" height="959" viewBox="0 0 1478 959"><rect x="280" y="286" width="1005" height="438" fill="#fff"/><line x1="338.5" y1="286" x2="338.5" y2="724" stroke="#c6c6c6" stroke-width="1"/><line x1="380.5" y1="286" x2="380.5" y2="724" stroke="#c6c6c6" stroke-width="1"/><line x1="411.5" y1="286" x2="411.5" y2="724" stroke="#c6c6c6" stroke-width="1"/><line x1="438.5" y1="286" x2="438.5" y2="724" stroke="#c6c6c6" stroke-width="1"/><line x1="460.5" y1="286" x2="460.5" y2="724" stroke="#c6c6c6" stroke-width="1"/><line x1="479.5" y1="286" x2="479.5" y2="724" stroke="#c6c6c6" stroke-width="1"/><line x1="496.5" y1="286" x2="496.5" y2="724" stroke="#c6c6c6" stroke-width="1"/><line x1="511.5" y1="286" x2="511.5" y2="724" stroke="#7c7c7c" stroke-width="1"/><line x1="610.5" y1="286" x2="610.5" y2="724" stroke="#c6c6c6" stroke-width="1"/><line x1="668.5" y1="286" x2="668.5" y2="724" stroke="#c6c6c6" stroke-width="1"/><line x1="710.5" y1="286" x2="710.5" y2="724" stroke="#c6c6c6" stroke-width="1"/><line x1="742.5" y1="286" x2="742.5" y2="724" stroke="#c6c6c6" stroke-width="1"/><line x1="768.5" y1="286" x2="768.5" y2="724" stroke="#c6c6c6" stroke-width="1"/><line x1="790.5" y1="286" x2="790.5" y2="724" stroke="#c6c6c6" stroke-width="1"/><line x1="809.5" y1="286" x2="809.5" y2="724" stroke="#c6c6c6" stroke-width="1"/><line x1="826.5" y1="286" x2="826.5" y2="724" stroke="#c6c6c6" stroke-width="1"/><line x1="841.5" y1="286" x2="841.5" y2="724" stroke="#7c7c7c" stroke-width="1"/><line x1="941.5" y1="286" x2="941.5" y2="724" stroke="#c6c6c6" stroke-width="1"/><line x1="999.5" y1="286" x2="999.5" y2="724" stroke="#c6c6c6" stroke-width="1"/><line x1="1040.5" y1="286" x2="1040.5" y2="724" stroke="#c6c6c6" stroke-width="1"/><line x1="1072.5" y1="286" x2="1072.5" y2="724" stroke="#c6c6c6" stroke-width="1"/><line x1="1098.5" y1="286" x2="1098.5" y2="724" stroke="#c6c6c6" stroke-width="1"/><line x1="1120.5" y1="286" x2="1120.5" y2="724" stroke="#c6c6c6" stroke-width="1"/><line x1="1139.5" y1="286" x2="1139.5" y2="724" stroke="#c6c6c6" stroke-width="1"/><line x1="1156.5" y1="286" x2="1156.5" y2="724" stroke="#c6c6c6" stroke-width="1"/><line x1="1171.5" y1="286" x2="1171.5" y2="724" stroke="#7c7c7c" stroke-width="1"/><line x1="1271.5" y1="286" x2="1271.5" y2="724" stroke="#c6c6c6" stroke-width="1"/><line x1="274" y1="327.5" x2="280" y2="327.5" stroke="#222" stroke-width="1.2"/><line x1="280" y1="366.5" x2="1285" y2="366.5" stroke="#c6c6c6" stroke-width="1"/><line x1="274" y1="366.5" x2="280" y2="366.5" stroke="#222" stroke-width="1.2"/><line x1="280" y1="406.5" x2="1285" y2="406.5" stroke="#c6c6c6" stroke-width="1"/><line x1="274" y1="406.5" x2="280" y2="406.5" stroke="#222" stroke-width="1.2"/><line x1="280" y1="446.5" x2="1285" y2="446.5" stroke="#c6c6c6" stroke-width="1"/><line x1="274" y1="446.5" x2="280" y2="446.5" stroke="#222" stroke-width="1.2"/><line x1="280" y1="485.5" x2="1285" y2="485.5" stroke="#c6c6c6" stroke-width="1"/><line x1="274" y1="485.5" x2="280" y2="485.5" stroke="#222" stroke-width="1.2"/><line x1="280" y1="525.5" x2="1285" y2="525.5" stroke="#c6c6c6" stroke-width="1"/><line x1="274" y1="525.5" x2="280" y2="525.5" stroke="#222" stroke-width="1.2"/><line x1="280" y1="564.5" x2="1285" y2="564.5" stroke="#c6c6c6" stroke-width="1"/><line x1="274" y1="564.5" x2="280" y2="564.5" stroke="#222" stroke-width="1.2"/><line x1="280" y1="604.5" x2="1285" y2="604.5" stroke="#c6c6c6" stroke-width="1"/><line x1="274" y1="604.5" x2="280" y2="604.5" stroke="#222" stroke-width="1.2"/><line x1="280" y1="644.5" x2="1285" y2="644.5" stroke="#c6c6c6" stroke-width="1"/><line x1="274" y1="644.5" x2="280" y2="644.5" stroke="#222" stroke-width="1.2"/><line x1="280" y1="683.5" x2="1285" y2="683.5" stroke="#c6c6c6" stroke-width="1"/><line x1="274" y1="683.5" x2="280" y2="683.5" stroke="#222" stroke-width="1.2"/><line x1="274" y1="723.5" x2="280" y2="723.5" stroke="#222" stroke-width="1.2"/><line x1="274" y1="287.5" x2="280" y2="287.5" stroke="#222" stroke-width="1.2"/><line x1="274" y1="327.6" x2="1285" y2="327.6" stroke="#000" stroke-width="1.6"/><line x1="280" y1="286.3" x2="1285" y2="286.3" stroke="#111" stroke-width="1.5"/><line x1="280.3" y1="286" x2="280.3" y2="725" stroke="#111" stroke-width="1.6"/><line x1="1285.3" y1="286" x2="1285.3" y2="725" stroke="#111" stroke-width="1.6"/><line x1="274" y1="724.3" x2="1286" y2="724.3" stroke="#111" stroke-width="2"/><line x1="280.5" y1="724" x2="280.5" y2="729" stroke="#111" stroke-width="1.2"/><line x1="559.5" y1="724" x2="559.5" y2="729" stroke="#111" stroke-width="1.2"/><line x1="338.5" y1="724" x2="338.5" y2="729" stroke="#111" stroke-width="1.2"/><line x1="380.5" y1="724" x2="380.5" y2="729" stroke="#111" stroke-width="1.2"/><line x1="411.5" y1="724" x2="411.5" y2="729" stroke="#111" stroke-width="1.2"/><line x1="438.5" y1="724" x2="438.5" y2="729" stroke="#111" stroke-width="1.2"/><line x1="460.5" y1="724" x2="460.5" y2="729" stroke="#111" stroke-width="1.2"/><line x1="479.5" y1="724" x2="479.5" y2="729" stroke="#111" stroke-width="1.2"/><line x1="496.5" y1="724" x2="496.5" y2="729" stroke="#111" stroke-width="1.2"/><line x1="511.5" y1="724" x2="511.5" y2="729" stroke="#111" stroke-width="1.2"/><line x1="610.5" y1="724" x2="610.5" y2="729" stroke="#111" stroke-width="1.2"/><line x1="668.5" y1="724" x2="668.5" y2="729" stroke="#111" stroke-width="1.2"/><line x1="710.5" y1="724" x2="710.5" y2="729" stroke="#111" stroke-width="1.2"/><line x1="742.5" y1="724" x2="742.5" y2="729" stroke="#111" stroke-width="1.2"/><line x1="768.5" y1="724" x2="768.5" y2="729" stroke="#111" stroke-width="1.2"/><line x1="790.5" y1="724" x2="790.5" y2="729" stroke="#111" stroke-width="1.2"/><line x1="809.5" y1="724" x2="809.5" y2="729" stroke="#111" stroke-width="1.2"/><line x1="826.5" y1="724" x2="826.5" y2="729" stroke="#111" stroke-width="1.2"/><line x1="841.5" y1="724" x2="841.5" y2="729" stroke="#111" stroke-width="1.2"/><line x1="941.5" y1="724" x2="941.5" y2="729" stroke="#111" stroke-width="1.2"/><line x1="999.5" y1="724" x2="999.5" y2="729" stroke="#111" stroke-width="1.2"/><line x1="1040.5" y1="724" x2="1040.5" y2="729" stroke="#111" stroke-width="1.2"/><line x1="1072.5" y1="724" x2="1072.5" y2="729" stroke="#111" stroke-width="1.2"/><line x1="1098.5" y1="724" x2="1098.5" y2="729" stroke="#111" stroke-width="1.2"/><line x1="1120.5" y1="724" x2="1120.5" y2="729" stroke="#111" stroke-width="1.2"/><line x1="1139.5" y1="724" x2="1139.5" y2="729" stroke="#111" stroke-width="1.2"/><line x1="1156.5" y1="724" x2="1156.5" y2="729" stroke="#111" stroke-width="1.2"/><line x1="1171.5" y1="724" x2="1171.5" y2="729" stroke="#111" stroke-width="1.2"/><line x1="1271.5" y1="724" x2="1271.5" y2="729" stroke="#111" stroke-width="1.2"/><line x1="1100.5" y1="724" x2="1100.5" y2="729" stroke="#111" stroke-width="1.2"/><polyline points="280,566.0 532.1,566.0 532.1,330.0 1285,330.0" fill="none" stroke="#6666dc" stroke-width="3.3"/><line x1="280" y1="566.0" x2="515" y2="566.0" stroke="#559c94" stroke-width="3.8"/><line x1="544" y1="330.0" x2="1285" y2="330.0" stroke="#559c94" stroke-width="3.6"/><polyline points="515,566 518,559 521,546 523.6,525 526.6,486 529.8,446 531.7,420 533,400 534.4,382 536.3,366 539,350 541.5,338 543.8,331.5 546,330.5" fill="none" stroke="#33dd33" stroke-width="1.1" stroke-linejoin="round"/><line x1="532.1" y1="382" x2="532.1" y2="447" stroke="#4aa890" stroke-width="1.6"/><rect x="533.8" y="329.3" width="3.4" height="3.4" fill="#fff" stroke="#8080e6" stroke-width="1"/><rect x="533.3" y="564.3" width="3.4" height="3.4" fill="#fff" stroke="#8080e6" stroke-width="1"/><rect x="1305" y="322" width="4.5" height="366" fill="#e6e6e6" stroke="#d6d6d6" stroke-width="1"/><path d="M1296,473 L1313,473 L1320,480 L1313,487 L1296,487 Z" fill="#0078d7"/><path d="M1296,522 L1313,522 L1320,529 L1313,536 L1296,536 Z" fill="#0078d7"/></svg>
<div class="t" style="right:1213.5px;top:288.7px;font-size:15.5px">1dB</div>
<div class="t" style="right:1213.5px;top:319.5px;font-size:15.5px"><b>0</b>dB</div>
<div class="t" style="right:1213.5px;top:359.1px;font-size:15.5px">-1dB</div>
<div class="t" style="right:1213.5px;top:398.7px;font-size:15.5px">-2dB</div>
<div class="t" style="right:1213.5px;top:438.3px;font-size:15.5px">-3dB</div>
<div class="t" style="right:1213.5px;top:477.9px;font-size:15.5px">-4dB</div>
<div class="t" style="right:1213.5px;top:517.5px;font-size:15.5px">-5dB</div>
<div class="t" style="right:1213.5px;top:557.1px;font-size:15.5px">-6dB</div>
<div class="t" style="right:1213.5px;top:596.7px;font-size:15.5px">-7dB</div>
<div class="t" style="right:1213.5px;top:636.3px;font-size:15.5px">-8dB</div>
<div class="t" style="right:1213.5px;top:675.9px;font-size:15.5px">-9dB</div>
<div class="t" style="right:1213.5px;top:705.7px;font-size:15.5px">-10dB</div>
<div class="t" style="left:1290px;top:288.5px;font-size:15px">+ dB</div>
<div class="t" style="left:1292px;top:708px;font-size:15px">- dB</div>
<div class="t" style="left:280.6px;top:731.5px;font-size:15.5px">20Hz</div>
<div class="t" style="left:380.0px;top:731.5px;font-size:15.5px;transform:translateX(-50%)">40Hz</div>
<div class="t" style="left:438.1px;top:731.5px;font-size:15.5px;transform:translateX(-50%)">60Hz</div>
<div class="t" style="left:511.4px;top:731.5px;font-size:15.5px;transform:translateX(-50%)"><b>100</b>Hz</div>
<div class="t" style="left:559.7px;top:733px;font-size:13.5px;transform:translateX(-50%)">140Hz</div>
<div class="t" style="left:610.8px;top:731.5px;font-size:15.5px;transform:translateX(-50%)">200Hz</div>
<div class="t" style="left:668.9px;top:731.5px;font-size:15.5px;transform:translateX(-50%)">300Hz</div>
<div class="t" style="left:742.2px;top:731.5px;font-size:15.5px;transform:translateX(-50%)">500Hz</div>
<div class="t" style="left:841.6px;top:731.5px;font-size:15.5px;transform:translateX(-50%)"><b>1000</b>Hz</div>
<div class="t" style="left:941.0px;top:731.5px;font-size:15.5px;transform:translateX(-50%)">2000Hz</div>
<div class="t" style="left:1040.4px;top:731.5px;font-size:15.5px;transform:translateX(-50%)">4000Hz</div>
<div class="t" style="left:1100.9px;top:733px;font-size:13.5px;transform:translateX(-50%)">6100Hz</div>
<div class="t" style="left:1171.8px;top:731.5px;font-size:15.5px;transform:translateX(-50%)"><b>10000</b>Hz</div>
<div class="t" style="right:193px;top:731.5px;font-size:15.5px">20000Hz</div>
<div class="abs" style="left:503px;top:769px;width:13px;height:13px;border:1.5px solid #484848;background:#fff"></div>
<div class="t" style="left:523px;top:770px;font-size:14.5px">Linear Frequency Scale</div>
<div class="abs" style="left:701px;top:765px;width:89px;height:23px;border:1px solid #adadad;background:#e1e1e1;font-size:14.5px;line-height:23px;text-align:center;white-space:nowrap;color:#000">Flatten</div>
<div class="abs" style="left:807px;top:765px;width:89px;height:23px;border:1px solid #adadad;background:#e1e1e1;font-size:14.5px;line-height:23px;text-align:center;white-space:nowrap;color:#000">Invert</div>
<div class="abs" style="left:912px;top:769px;width:13px;height:13px;border:1.5px solid #484848;background:#fff"></div>
<svg class="abs" style="left:912px;top:769px" width="16" height="16"><path d="M3.2,8.8 L6.5,12 L13.6,4.6" fill="none" stroke="#444" stroke-width="1.6"/></svg>
<div class="t" style="left:932px;top:770px;font-size:14.5px">Show grid lines</div>
</body></html>
